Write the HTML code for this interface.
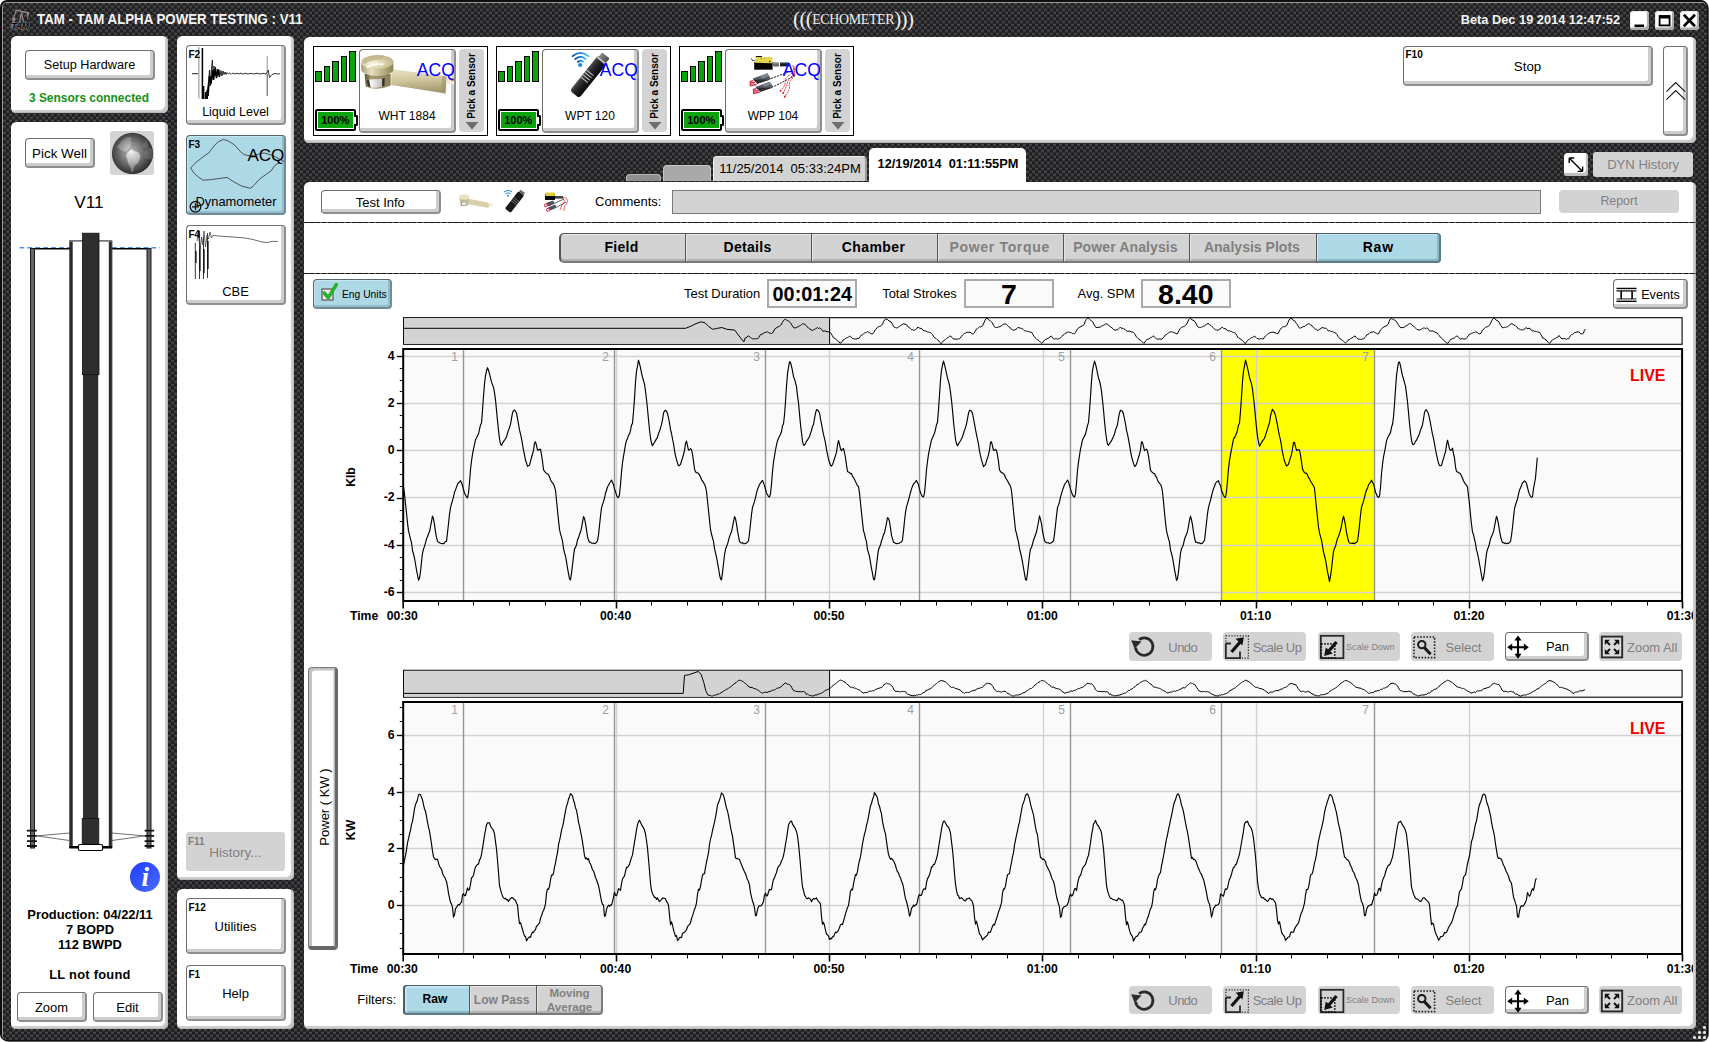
<!DOCTYPE html><html><head><meta charset="utf-8"><title>TAM</title><style>
*{box-sizing:border-box;margin:0;padding:0}
html,body{width:1709px;height:1042px;overflow:hidden;background:#fff}
body{font-family:"Liberation Sans",sans-serif;font-size:13px;color:#000;position:relative}
.abs,.panel,.btn,.dis,.t{position:absolute}
#win0{position:absolute;left:1px;top:1px;width:1708px;height:1041px;border-radius:8px;background:#5c5c5c}
#win{position:absolute;left:0;top:0;width:1708px;height:1041px;border-radius:7px;background:#0e0e0e;overflow:hidden}
#win2{position:absolute;left:2px;top:2px;width:1705px;height:1038px;border-radius:5px;border-left:1px solid #9a9a9a;border-top:1px solid #9a9a9a;
 background:#2c2c2e;overflow:hidden}
.panel{background:#fff;border-radius:5.5px;box-shadow:inset -1px -1px 0 #b9b9b9,inset -3px -3px 1px #cbcbcb}
.btn{background:#fff;border:1px solid #6e6e6e;border-right:2px solid #8e8e8e;border-bottom:2px solid #8e8e8e;border-radius:4px;
 box-shadow:inset -3px -3px 0 #cdcdcd;text-align:center;white-space:nowrap}
.dis{background:#d3d3d3;border-radius:4px;color:#808080;text-align:center;white-space:nowrap}
.t{white-space:pre;line-height:1}
.b{font-weight:bold}
.fk{position:absolute;left:1.5px;top:3.7px;font-weight:bold;font-size:10px;line-height:1}
</style></head><body>
<div id="win0"></div><div id="win"></div><div id="win2"><svg style="position:absolute;left:-3px;top:-3px" width="1709" height="1042"><defs><pattern id="cf" width="6" height="6" patternUnits="userSpaceOnUse"><rect x="0" y="0" width="3" height="1" fill="#1d1d1f"/><rect x="0" y="1" width="3" height="1" fill="#212123"/><rect x="0" y="2" width="3" height="1" fill="#29292b"/><rect x="3" y="0" width="3" height="1" fill="#4a4a4c"/><rect x="3" y="1" width="3" height="1" fill="#3a3a3c"/><rect x="3" y="2" width="3" height="1" fill="#2d2d2f"/><rect x="0" y="3" width="3" height="1" fill="#4a4a4c"/><rect x="0" y="4" width="3" height="1" fill="#3a3a3c"/><rect x="0" y="5" width="3" height="1" fill="#2d2d2f"/><rect x="3" y="3" width="3" height="1" fill="#1d1d1f"/><rect x="3" y="4" width="3" height="1" fill="#212123"/><rect x="3" y="5" width="3" height="1" fill="#29292b"/></pattern></defs><rect width="1709" height="1042" fill="url(#cf)" shape-rendering="crispEdges"/></svg></div>
<svg class="abs" style="left:8px;top:8px" width="26" height="26" viewBox="8 8 26 26">
<g stroke="#96828a" fill="none" stroke-linecap="round"><path d="M16.1 10.3 L28.6 13" stroke-width="1.5"/><path d="M16.1 10.3 L14 17.3" stroke-width="1.2"/><path d="M21.3 13.2 L19.7 21.5 M21.6 13.2 L23.3 21.5" stroke-width="1.3"/><path d="M13.5 22 L11 28" stroke-width="1.3"/></g>
<path d="M26.6 12.8 L29.1 12.5 L27.7 19.2 Z" fill="#a08c92"/><path d="M12.4 16.8 L15.6 18.6 L14.6 21.4 L12 20.6 Z" fill="#96828a"/>
<text x="11.6" y="28.8" font-family="Liberation Sans" font-size="9.3" font-style="italic" font-weight="bold" fill="#000" stroke="#8a8a8a" stroke-width="1.1" paint-order="stroke" textLength="17.5" lengthAdjust="spacingAndGlyphs">TAM</text>
</svg>
<div class="t b" style="top:12.75px;font-size:13.9px;left:37.40px;color:#f4f4f4;transform:scaleX(0.956);transform-origin:0 0;">TAM - TAM ALPHA POWER TESTING : V11</div>
<div class="t b" style="top:12.60px;font-size:13.4px;left:1219.80px;width:400px;text-align:right;color:#f4f4f4;transform:scaleX(0.955);transform-origin:100% 0;">Beta Dec 19 2014 12:47:52</div>
<div class="t" style="left:793px;top:7.5px;font-family:'Liberation Serif',serif;color:#f0f0f0;font-size:21px;letter-spacing:-0.6px;line-height:22px">(((<span style="font-size:13.9px;letter-spacing:-0.32px;position:relative;top:-1.6px">ECHOMETER</span>)))</div>
<div class="abs" style="left:1630px;top:10.5px;width:19px;height:19px;background:#fff;border-radius:3.5px;box-shadow:inset -2px -2.5px 1px #a8a8a8,inset 1px 1px 0 #e8e8e8"><svg width="19" height="19"><path d="M4.5 14.8 H14" stroke="#000" stroke-width="2.6"/></svg></div>
<div class="abs" style="left:1654.5px;top:10.5px;width:19px;height:19px;background:#fff;border-radius:3.5px;box-shadow:inset -2px -2.5px 1px #a8a8a8,inset 1px 1px 0 #e8e8e8"><svg width="19" height="19"><rect x="4.6" y="5" width="10" height="9.4" fill="none" stroke="#000" stroke-width="1.8"/><path d="M4.6 6 H14.6" stroke="#000" stroke-width="3"/></svg></div>
<div class="abs" style="left:1679.5px;top:10.5px;width:19px;height:19px;background:#fff;border-radius:3.5px;box-shadow:inset -2px -2.5px 1px #a8a8a8,inset 1px 1px 0 #e8e8e8"><svg width="19" height="19"><path d="M3.8 3.8 L15 15.2 M15 3.8 L3.8 15.2" stroke="#000" stroke-width="2.7"/></svg></div>
<div class="panel" style="left:11px;top:36px;width:157px;height:77px;"></div>
<div class="btn" style="left:25px;top:50px;width:130px;height:30px;"><div class="t" style="left:0;width:100%;text-align:center;top:8.2px;font-size:12.65px">Setup Hardware</div></div>
<div class="t b" style="top:93.03px;font-size:11.95px;left:-111.00px;width:400px;text-align:center;color:#169016;">3 Sensors connected</div>
<div class="panel" style="left:11px;top:122px;width:157px;height:907px;"></div>
<div class="btn" style="left:25px;top:138px;width:70px;height:29.5px;"><div class="t" style="left:0;width:100%;text-align:center;top:7.5px;font-size:13.4px">Pick Well</div></div>
<div class="abs" style="left:110px;top:131px;width:44px;height:43.6px;background:#d4d4d4;border-radius:3px"></div>
<svg class="abs" style="left:110px;top:131px" width="44" height="44" viewBox="0 0 44 44">
<defs><radialGradient id="gl" cx="0.47" cy="0.47" r="0.56"><stop offset="0" stop-color="#bcbcbc"/><stop offset="0.5" stop-color="#727272"/><stop offset="1" stop-color="#262626"/></radialGradient>
<radialGradient id="gl2" gradientUnits="userSpaceOnUse" cx="21" cy="20" r="22"><stop offset="0" stop-color="#f4f4f4"/><stop offset="0.45" stop-color="#c0c0c0"/><stop offset="1" stop-color="#6a6a6a"/></radialGradient></defs>
<circle cx="22.5" cy="22.4" r="20.6" fill="url(#gl)"/>
<path d="M7.2 16 L11 10.5 L16 6.7 L19.5 6 L21.9 6.7 L20.5 9.5 L21.9 12.5 L20.5 15.5 L18 18.7 L16 21 L13 20 L10 18.5 Z" fill="url(#gl2)" opacity=".5"/>
<path d="M17.5 21.4 L21.4 18 L23.9 20 L27.9 21 L30.2 23.9 L29.7 28.4 L27.9 31.9 L24.9 34.4 L23.9 36.9 L22.9 40.9 L21.2 40.9 L20.5 36.4 L18.5 32.9 L17 27.9 L16 24.4 Z" fill="url(#gl2)" opacity=".95"/>
<path d="M31.9 14.5 L34.4 12.5 L35.4 8.5 L37.4 11 L38.4 17 L41.9 17.5 L42.7 22 L42.4 27.9 L38.9 28.4 L34.9 26.9 L33.9 22 L35.4 19.5 L37.9 18 L34 16 Z" fill="#8a8a8a" opacity=".35"/>
</svg>
<div class="t " style="top:194.25px;font-size:17.3px;left:-111.00px;width:400px;text-align:center;color:#000;">V11</div>
<svg class="abs" style="left:11px;top:225px" width="157" height="640" viewBox="11 225 157 640">
<path d="M19.5 247.7 H70 M112 247.7 H160" stroke="#4f8df7" stroke-width="1.6" stroke-dasharray="4.8 3.1"/>
<path d="M30.5 248.7 H70 M111.5 248.7 H150.5" stroke="#000" stroke-width="1.4"/>
<!-- outer casing -->
<rect x="30.5" y="248.5" width="4" height="599.5" fill="#666" stroke="#1a1a1a" stroke-width="1"/>
<rect x="147" y="248.5" width="4" height="599.5" fill="#666" stroke="#1a1a1a" stroke-width="1"/>
<!-- inner casing -->
<rect x="69.3" y="240.2" width="3.4" height="607.5" fill="#2a2a2a"/><rect x="72.2" y="241" width=".6" height="606" fill="#6a6a6a"/>
<rect x="108.8" y="240.2" width="3.4" height="607.5" fill="#2a2a2a"/><rect x="111.7" y="241" width=".6" height="606" fill="#6a6a6a"/>
<path d="M70 240.9 H112" stroke="#777" stroke-width="1.7"/>
<path d="M69.3 847.3 H112.2" stroke="#000" stroke-width="2.4"/>
<!-- tubing -->
<rect x="83.6" y="370" width="14.2" height="452" fill="#2e2e2e" stroke="#111" stroke-width="0.8"/>
<rect x="82.4" y="233.2" width="16.6" height="141.5" fill="#2e2e2e" stroke="#111" stroke-width="0.8"/>
<rect x="82.2" y="818.6" width="16.6" height="26.4" fill="#2e2e2e" stroke="#111" stroke-width="0.8"/>
<rect x="78.4" y="844.5" width="24.2" height="6" rx="1.5" fill="#fff" stroke="#000" stroke-width="1.1"/>
<!-- perforations -->
<g stroke="#111" stroke-width="1.8"><path d="M27 830.7 H36.8 M27 835.9 H36.8 M27 841.1 H36.8 M27 846 H36.8"/><path d="M144.6 830.7 H154.2 M144.6 835.9 H154.2 M144.6 841.1 H154.2 M144.6 846 H154.2"/></g>
<g stroke="#333" stroke-width="0.7" fill="none"><path d="M36.8 835.9 L69.3 833 M36.8 835.9 L69.3 840.5 M144.6 835.9 L112 833 M144.6 835.9 L112 840.5"/></g>
</svg>
<svg class="abs" style="left:129px;top:861px" width="32" height="32" viewBox="0 0 32 32">
<defs><linearGradient id="ig" x1="0" y1="0" x2="1" y2="1"><stop offset="0" stop-color="#1f3dff"/><stop offset="1" stop-color="#4b6bff"/></linearGradient></defs>
<circle cx="16" cy="16" r="15" fill="url(#ig)"/>
<text x="16.3" y="25" text-anchor="middle" font-family="Liberation Serif" font-style="italic" font-weight="bold" font-size="27" fill="#fff">i</text></svg>
<div class="t b" style="top:908.85px;font-size:12.9px;left:-110.00px;width:400px;text-align:center;">Production: 04/22/11</div>
<div class="t b" style="top:923.75px;font-size:12.9px;left:-110.00px;width:400px;text-align:center;">7 BOPD</div>
<div class="t b" style="top:938.75px;font-size:12.9px;left:-110.00px;width:400px;text-align:center;">112 BWPD</div>
<div class="t b" style="top:968.75px;font-size:12.9px;left:-110.00px;width:400px;text-align:center;letter-spacing:0.25px;">LL not found</div>
<div class="btn" style="left:17px;top:992px;width:70px;height:29.5px;"><div class="t" style="left:0;width:100%;text-align:center;top:7.5px;font-size:13px">Zoom</div></div>
<div class="btn" style="left:93px;top:992px;width:70px;height:29.5px;"><div class="t" style="left:0;width:100%;text-align:center;top:7.5px;font-size:13px">Edit</div></div>
<div class="panel" style="left:177px;top:36px;width:117px;height:844px;"></div>
<div class="panel" style="left:177px;top:889px;width:117px;height:140px;"></div>
<div class="btn" style="left:186px;top:45px;width:100px;height:80px;"><svg class="abs" style="left:-1.2px;top:-1px" width="100" height="80" viewBox="186 45 100 80">
<path d="M198.9 47 V98.5" stroke="#888" stroke-width="1"/>
<path d="M202.4 48 V99 M203.6 86 V99 M205.6 92 V99 M207.3 90 V99" stroke="#000" stroke-width="1.5"/>
<path d="M206 99 L208.5 82 L209.5 70 L210.3 86 L211.5 68 L212.4 60 L213 78 L214 66 L214.8 76 L215.5 67 L216.4 75 L217.3 69 L218 75 L219 69.5 L220 75.5 L221 70.5 L222 76 L223 71 L224 74.5 L225 72 L226 74.5 L227 72.5 L228.5 74 L230 72.8 L231.5 74.3 L233 73 L235 74 L237 73.2 L239 74 L241 73 L243 74.2 L245 73.2 L248 74 L251 73.3 L254 74 L257 73.2 L260 74 L263 73.3 L266 74 L268.2 70 L269.5 77.5 L272 74.5 L275 73.5 L278 74 L280 73.6" stroke="#000" stroke-width="0.8" fill="none"/>
<path d="M208 96 L209.5 76 L211 84 L212.5 70 L213.5 80 L215 69 L216.5 78 L218 70 L219.5 77" stroke="#000" stroke-width="1.6" fill="none"/>
<path d="M192 73.7 H198" stroke="#000" stroke-width="0.9"/><path d="M267.2 56 V74" stroke="#666" stroke-width=".7"/><path d="M267.2 74 V96" stroke="#222" stroke-width=".8"/>
</svg><div class="fk">F2</div><div class="t" style="left:0;width:100%;text-align:center;top:60px;font-size:12.5px">Liquid Level</div></div>
<div class="btn" style="left:186px;top:135px;width:100px;height:80px;background:#add8e6;border-color:#56666c;border-right-color:#6f8c96;border-bottom-color:#6f8c96;box-shadow:inset -2px -2px 0 #94bccb,inset 1px 1px 0 #c8e6f0"><svg class="abs" style="left:-1px;top:0" width="100" height="80" viewBox="186 135 100 80">
<path d="M190.7 167.1 L195 162.3 L201.9 156.7 L208.8 151.9 L214 145 L218.3 140.7 L223.5 138.4 L228.7 140.2 L234.7 144.1 L240.8 151 L244.2 153.6 L250.3 155 L257.2 153.6 L264.1 151.9 L272.7 154.5 L279.6 158 L284 160.5" stroke="#444" stroke-width="0.9" fill="none"/>
<path d="M190.7 167.1 L194.1 172.3 L198.5 176.1 L202.8 179.2 L210.5 178.7 L219.2 177.5 L227 176.4 L233 180.4 L241.6 185.1 L250.3 187.3 L253.7 184.7 L258.9 178.7 L265.8 173.5 L271 170 L274.4 164.9 L279.6 161.4" stroke="#444" stroke-width="0.9" fill="none"/>
<circle cx="195.5" cy="205.8" r="5.3" fill="none" stroke="#111" stroke-width="1.3"/><path d="M192 205.8 H199 M195.5 202.3 V209.3" stroke="#111" stroke-width="1.3"/>
</svg><div class="fk">F3</div><div class="t" style="left:60.5px;top:10.8px;font-size:17px">ACQ</div><div class="t" style="left:8.5px;top:59.5px;font-size:12.9px">Dynamometer</div></div>
<div class="btn" style="left:186px;top:225px;width:100px;height:80px;"><svg class="abs" style="left:0;top:0" width="100" height="80" viewBox="186 225 100 80">
<path d="M194.3 242 V278 M198.5 230 V278 M202.5 236 V278 M206.5 232 V277" stroke="#222" stroke-width="0.9"/>
<path d="M195 250 V262 M199 244 V270 M203 248 V272 M207 240 V268" stroke="#000" stroke-width="1.2"/>
<path d="M196 240 L197.3 232 L199 248 L200.5 236 L201.5 244 L203 230 L204.5 246 L206 234 L207.5 238 L209 231 L210.5 237 L212 234.5 L220 235.2 L232 236 L244 237 L252 238.5 L260 240.8 L266 241.5 L272 240.3 L277 240.5" stroke="#444" stroke-width="0.8" fill="none"/>
</svg><div class="fk">F4</div><div class="t" style="left:0;width:100%;text-align:center;top:59.5px;font-size:12.9px">CBE</div></div>
<div class="dis" style="left:186px;top:832px;width:99px;height:38.5px;border-radius:3px"><div class="fk" style="top:4.5px;left:2px;color:#808080">F11</div><div class="t" style="left:0;width:100%;text-align:center;top:13.5px;font-size:13.5px">History...</div></div>
<div class="btn" style="left:186px;top:898px;width:100px;height:56px;"><div class="fk">F12</div><div class="t" style="left:0;width:100%;text-align:center;top:21px;font-size:13px">Utilities</div></div>
<div class="btn" style="left:186px;top:965px;width:100px;height:56px;"><div class="fk">F1</div><div class="t" style="left:0;width:100%;text-align:center;top:21px;font-size:13px">Help</div></div>
<div class="panel" style="left:304px;top:37px;width:1392px;height:106px;"></div>
<div class="abs" style="left:313px;top:46px;width:175px;height:90px;border:1px solid #000;background:#fff"></div>
<div class="abs" style="left:315.20px;top:71.2px;width:6.8px;height:10.6px;background:#0aa50a;border:1.7px solid #000"></div>
<div class="abs" style="left:323.65px;top:66.2px;width:6.8px;height:15.6px;background:#0aa50a;border:1.7px solid #000"></div>
<div class="abs" style="left:332.10px;top:61.2px;width:6.8px;height:20.6px;background:#0aa50a;border:1.7px solid #000"></div>
<div class="abs" style="left:340.55px;top:56.2px;width:6.8px;height:25.6px;background:#0aa50a;border:1.7px solid #000"></div>
<div class="abs" style="left:349.00px;top:51.2px;width:6.8px;height:30.6px;background:#0aa50a;border:1.7px solid #000"></div>
<div class="abs" style="left:315px;top:109px;width:40.5px;height:21.5px;border:2px solid #000;border-radius:2px;background:#fff"></div>
<div class="abs" style="left:354px;top:114.5px;width:4px;height:11px;border:2px solid #000;border-left:none;border-radius:0 2px 2px 0;background:#fff"></div>
<div class="abs" style="left:318px;top:112px;width:34.5px;height:15.5px;background:#0aa50a"></div>
<div class="t b" style="left:318px;width:34.5px;text-align:center;top:115.2px;font-size:11px">100%</div>
<div class="btn" style="left:359px;top:49px;width:97px;height:83.5px;overflow:hidden"><svg class="abs" style="left:0;top:0" width="97" height="60" viewBox="0 0 97 60">
<defs><linearGradient id="s1a" x1="0" y1="0" x2="0.12" y2="1"><stop offset="0" stop-color="#e9e2c4"/><stop offset=".45" stop-color="#d3c9a2"/><stop offset="1" stop-color="#a3976e"/></linearGradient>
<linearGradient id="s1b" x1="0" y1="0" x2="1" y2="0"><stop offset="0" stop-color="#a89c72"/><stop offset=".3" stop-color="#e9e2c6"/><stop offset=".62" stop-color="#c2b68a"/><stop offset="1" stop-color="#8e8258"/></linearGradient>
<linearGradient id="s1c" x1="0" y1="0" x2="1" y2="0"><stop offset="0" stop-color="#5e5438"/><stop offset=".25" stop-color="#a89c70"/><stop offset="1" stop-color="#8a7e56"/></linearGradient>
<linearGradient id="s1d" x1="0" y1="0" x2="1" y2="0"><stop offset="0" stop-color="#fff"/><stop offset="1" stop-color="#bdbdbd"/></linearGradient>
<radialGradient id="s1e" cx=".35" cy=".6" r=".8"><stop offset="0" stop-color="#f7f3df"/><stop offset=".5" stop-color="#d9cfa8"/><stop offset="1" stop-color="#b4a87e"/></radialGradient></defs>
<path d="M31.3 19 L86.7 26.6 L85.5 43.6 L31.3 35.1 Z" fill="url(#s1a)"/>
<path d="M82.2 26 L86.7 26.6 L85.5 43.6 L81.3 43 Z" fill="#9c9068" opacity=".55"/>
<path d="M86.7 27.2 L94 26.6 L94 34.5 L86.7 33.9 Z" fill="#f3eedc"/><rect x="91" y="28.3" width="3" height="2.4" fill="#d63a3a"/>
<path d="M4.6 24 L30.7 24 L30.7 35.5 Q17.5 41.5 5.8 36.5 Z" fill="url(#s1c)"/>
<path d="M9 29.6 L22.2 28.8 L22.2 36.6 Q15 38.6 10.4 37.2 Z" fill="url(#s1d)"/><path d="M22.2 28.8 L24.6 28 L24.6 35.8 L22.2 36.6 Z" fill="#2c2c2c"/><path d="M9 29.6 L10.4 37.2 L8.4 36.4 L6.6 30.6 Z" fill="#3a3424"/>
<path d="M1.2 12 L1.2 19.5 A16.1 6.5 0 0 0 33.4 19.5 L33.4 12 Z" fill="url(#s1b)"/>
<ellipse cx="17.3" cy="12" rx="16.1" ry="6.9" fill="url(#s1e)"/>
<path d="M2 10.5 Q10 3.6 24 5.6 L22 9.5 Q10 9.5 4 14.5 Z" fill="#bfb286" opacity=".75"/>
<path d="M6 16.5 Q12 13 19 12.5 L18 15 Q11 16 7.5 18.5 Z" fill="#fffdf2" opacity=".9"/>
<ellipse cx="21.5" cy="14.3" rx="2.6" ry="1.1" fill="#fffef6" opacity=".9"/>
</svg><div class="t" style="left:0;width:100%;text-align:center;top:60px;font-size:12px;padding-right:0px">WHT 1884</div><div class="t" style="right:-1px;top:11.9px;font-size:17.6px;color:#0000ff">ACQ</div></div>
<div class="abs" style="left:459px;top:49px;width:25px;height:83px;background:#d3d3d3;border-radius:4px"></div>
<div class="t b" style="left:471.5px;top:85.8px;font-size:10px;transform:translate(-50%,-50%) rotate(-90deg)">Pick a Sensor</div>
<svg class="abs" style="left:465px;top:121px" width="14" height="9"><path d="M0.5 1 H13.5 L7 8.5 Z" fill="#6e6e6e"/></svg>
<div class="abs" style="left:496px;top:46px;width:175px;height:90px;border:1px solid #000;background:#fff"></div>
<div class="abs" style="left:498.20px;top:71.2px;width:6.8px;height:10.6px;background:#0aa50a;border:1.7px solid #000"></div>
<div class="abs" style="left:506.65px;top:66.2px;width:6.8px;height:15.6px;background:#0aa50a;border:1.7px solid #000"></div>
<div class="abs" style="left:515.10px;top:61.2px;width:6.8px;height:20.6px;background:#0aa50a;border:1.7px solid #000"></div>
<div class="abs" style="left:523.55px;top:56.2px;width:6.8px;height:25.6px;background:#0aa50a;border:1.7px solid #000"></div>
<div class="abs" style="left:532.00px;top:51.2px;width:6.8px;height:30.6px;background:#0aa50a;border:1.7px solid #000"></div>
<div class="abs" style="left:498px;top:109px;width:40.5px;height:21.5px;border:2px solid #000;border-radius:2px;background:#fff"></div>
<div class="abs" style="left:537px;top:114.5px;width:4px;height:11px;border:2px solid #000;border-left:none;border-radius:0 2px 2px 0;background:#fff"></div>
<div class="abs" style="left:501px;top:112px;width:34.5px;height:15.5px;background:#0aa50a"></div>
<div class="t b" style="left:501px;width:34.5px;text-align:center;top:115.2px;font-size:11px">100%</div>
<div class="btn" style="left:542px;top:49px;width:97px;height:83.5px;overflow:hidden"><svg class="abs" style="left:0;top:0" width="97" height="60" viewBox="0 0 97 60">
<defs><linearGradient id="s2a" x1="0" y1="0" x2="0" y2="1"><stop offset="0" stop-color="#4e4e4e"/><stop offset=".35" stop-color="#2a2a2a"/><stop offset="1" stop-color="#080808"/></linearGradient>
<linearGradient id="s2b" x1="0" y1="0" x2="0" y2="1"><stop offset="0" stop-color="#8a8a8a"/><stop offset="1" stop-color="#4a4a4a"/></linearGradient>
<linearGradient id="s2w" x1="0" y1="0" x2="1" y2="0"><stop offset="0" stop-color="#0048b0"/><stop offset="1" stop-color="#38c4ff"/></linearGradient></defs>
<g transform="translate(47.8,24.1) rotate(-51.2)"><rect x="-26" y="-6" width="45" height="12" rx="3" fill="url(#s2a)"/>
<rect x="18" y="-4.8" width="6" height="9.6" rx="1" fill="url(#s2b)"/><rect x="16.2" y="-5.8" width="2" height="11.6" fill="#bdbdbd"/>
<g stroke="#b8b8b8" stroke-width="1.1"><path d="M-8.5 -6 V3 M-5.5 -6 V3 M-2.5 -6 V3 M0.5 -6 V3"/></g></g>
<g fill="none" stroke="url(#s2w)" stroke-width="1.7" stroke-linecap="round"><path d="M29.6 6.2 Q37.5 -0.6 45.4 6.2"/><path d="M32.2 9.2 Q37.5 4.4 42.6 9"/><path d="M34.8 12 Q37.5 9.6 40.2 11.8"/></g><circle cx="37.2" cy="15" r="2.1" fill="#168ae0"/>
</svg><div class="t" style="left:0;width:100%;text-align:center;top:60px;font-size:12px;padding-right:0px">WPT 120</div><div class="t" style="right:-1px;top:11.9px;font-size:17.6px;color:#0000ff">ACQ</div></div>
<div class="abs" style="left:642px;top:49px;width:25px;height:83px;background:#d3d3d3;border-radius:4px"></div>
<div class="t b" style="left:654.5px;top:85.8px;font-size:10px;transform:translate(-50%,-50%) rotate(-90deg)">Pick a Sensor</div>
<svg class="abs" style="left:648px;top:121px" width="14" height="9"><path d="M0.5 1 H13.5 L7 8.5 Z" fill="#6e6e6e"/></svg>
<div class="abs" style="left:679px;top:46px;width:175px;height:90px;border:1px solid #000;background:#fff"></div>
<div class="abs" style="left:681.20px;top:71.2px;width:6.8px;height:10.6px;background:#0aa50a;border:1.7px solid #000"></div>
<div class="abs" style="left:689.65px;top:66.2px;width:6.8px;height:15.6px;background:#0aa50a;border:1.7px solid #000"></div>
<div class="abs" style="left:698.10px;top:61.2px;width:6.8px;height:20.6px;background:#0aa50a;border:1.7px solid #000"></div>
<div class="abs" style="left:706.55px;top:56.2px;width:6.8px;height:25.6px;background:#0aa50a;border:1.7px solid #000"></div>
<div class="abs" style="left:715.00px;top:51.2px;width:6.8px;height:30.6px;background:#0aa50a;border:1.7px solid #000"></div>
<div class="abs" style="left:681px;top:109px;width:40.5px;height:21.5px;border:2px solid #000;border-radius:2px;background:#fff"></div>
<div class="abs" style="left:720px;top:114.5px;width:4px;height:11px;border:2px solid #000;border-left:none;border-radius:0 2px 2px 0;background:#fff"></div>
<div class="abs" style="left:684px;top:112px;width:34.5px;height:15.5px;background:#0aa50a"></div>
<div class="t b" style="left:684px;width:34.5px;text-align:center;top:115.2px;font-size:11px">100%</div>
<div class="btn" style="left:725px;top:49px;width:97px;height:83.5px;overflow:hidden"><svg class="abs" style="left:0;top:0" width="97" height="60" viewBox="0 0 97 60">
<rect x="28.2" y="12" width="18.4" height="7.7" fill="#050505"/><path d="M29.8 6.7 L46.6 7.2 L46.2 13.3 L28.7 12.8 Z" fill="#e4d64a"/><path d="M29.8 6 H36 V7 H29.8Z" fill="#111"/>
<circle cx="35" cy="8.6" r=".8" fill="#7a9ad0"/><circle cx="39.2" cy="8.8" r=".7" fill="#a8b8c8"/><circle cx="43.8" cy="11.6" r=".8" fill="#222"/>
<path d="M25.3 8.3 L26.6 10.6 L28.7 10.4" fill="none" stroke="#222" stroke-width=".9"/>
<rect x="47" y="12" width="6" height="4.6" fill="#6e6e6e"/><rect x="47" y="12" width="6" height="1.4" fill="#aaa"/><rect x="54" y="12.2" width="9" height="4.2" fill="#1a1a1a"/><rect x="54" y="12.2" width="9" height="1" fill="#8aa0b8"/>
<path d="M45.1 28.5 L64.6 21.2 M48.2 36.4 L69.3 25.4" stroke="#111" stroke-width=".9" stroke-dasharray="2.2 .9"/>
<path d="M26.6 28.5 L36 25.2 L41.4 23.3 L45.1 29.1 L31.4 33.8 Z" fill="#5a6068"/><path d="M34 26 L41.4 23.3 L43 26 L36 28.6 Z" fill="#7e8892"/><path d="M27 29.5 L44.6 29.5 L31.4 33.8 Z" fill="#2c2e32"/>
<path d="M29.3 37 L38 33.8 L43.5 31.7 L47.7 37 L34.5 41.7 Z" fill="#5a6068"/><path d="M36.5 34.4 L43.5 31.7 L45.4 34.2 L38.5 36.8 Z" fill="#7e8892"/><path d="M30 37.8 L47.4 37.4 L34.5 41.7 Z" fill="#2c2e32"/>
<path d="M27.4 30.6 L24.4 31.6 L24.4 35.6 L30.6 34.4 M25 33 L29 32.6" fill="none" stroke="#d2364e" stroke-width="1.5"/><path d="M30.4 38.4 L27.6 39.6 L27.8 43.4 L33.8 42 M28.4 41 L32.4 40.4" fill="none" stroke="#d2364e" stroke-width="1.5"/>
<g fill="none" stroke="#e31d1d" stroke-width=".9" stroke-dasharray="1.8 .8"><path d="M66.7 15.4 Q69 20 65 24 Q58.5 28 59.3 30 Q60 35 55.1 40.1"/><path d="M67.5 16 Q70.5 22 66 26 Q61 31 61 35 L57.7 42.2"/><path d="M68 18 Q70 24 67 28 Q62.5 31.5 63.5 35.9 Q64 40 59.3 45.9"/></g>
<path d="M55.1 40.1 l-1 1.6 M57.7 42.2 l-1 1.6 M59.3 45.9 l-1 1.6" stroke="#d21d1d" stroke-width="1.6"/>
</svg><div class="t" style="left:0;width:100%;text-align:center;top:60px;font-size:12px;padding-right:0px">WPP 104</div><div class="t" style="right:-1px;top:11.9px;font-size:17.6px;color:#0000ff">ACQ</div></div>
<div class="abs" style="left:825px;top:49px;width:25px;height:83px;background:#d3d3d3;border-radius:4px"></div>
<div class="t b" style="left:837.5px;top:85.8px;font-size:10px;transform:translate(-50%,-50%) rotate(-90deg)">Pick a Sensor</div>
<svg class="abs" style="left:831px;top:121px" width="14" height="9"><path d="M0.5 1 H13.5 L7 8.5 Z" fill="#6e6e6e"/></svg>
<div class="btn" style="left:1403px;top:45.5px;width:250px;height:40.0px;"><div class="fk" style="left:1.5px;top:3px">F10</div><div class="t" style="left:0;width:100%;text-align:center;top:13px;font-size:13.3px">Stop</div></div>
<div class="btn" style="left:1663px;top:45.5px;width:24.5px;height:90.0px;"><svg class="abs" style="left:0px;top:30px" width="24" height="26"><path d="M2.4 14.6 L11.7 5.6 L21 14.6 M2.4 22.6 L11.7 13.6 L21 22.6" fill="none" stroke="#111" stroke-width="1.1"/></svg></div>
<div class="abs" style="left:626px;top:174px;width:35px;height:6.5px;background:#8f8f8f;border-radius:4px 4px 0 0;border:1px solid #b5b5b5;border-bottom:none"></div>
<div class="abs" style="left:663px;top:165px;width:48px;height:15.5px;background:#a9a9a9;border-radius:4px 4px 0 0;border:1px solid #c6c6c6;border-bottom:none"></div>
<div class="abs" style="left:713px;top:156px;width:154px;height:24.5px;background:#d3d3d3;border-radius:4px 4px 0 0;border:1px solid #efefef;border-right:2px solid #9a9a9a;border-bottom:none"></div>
<div class="t " style="top:162.00px;font-size:13px;left:590.00px;width:400px;text-align:center;">11/25/2014  05:33:24PM</div>
<div class="panel" style="left:304px;top:182px;width:1392px;height:847px;"></div>
<div class="abs" style="left:869px;top:148px;width:157px;height:40px;background:#fff;border-radius:5px 5px 0 0"></div>
<div class="t b" style="top:158.10px;font-size:12.8px;left:748.00px;width:400px;text-align:center;">12/19/2014  01:11:55PM</div>
<div class="abs" style="left:1563.6px;top:152.6px;width:24px;height:23.8px;background:#fff;border-radius:3.5px;box-shadow:inset -2px -3px 1px #bcbcbc"><svg width="24" height="24"><path d="M5.2 5 L18.6 18.4 M5.2 5 V10 M5.2 5 H10.2 M18.6 18.4 V13.4 M18.6 18.4 H13.6" fill="none" stroke="#000" stroke-width="1.4"/></svg></div>
<div class="dis" style="left:1593.3px;top:152.3px;width:99.70000000000005px;height:24.5px;border-radius:3px"><div class="t" style="left:0;width:100%;text-align:center;top:5.5px;font-size:13.1px">DYN History</div></div>
<div class="btn" style="left:321px;top:190px;width:119.5px;height:23.5px;"><div class="t" style="left:0;width:100%;text-align:center;top:4.8px;font-size:13px">Test Info</div></div>
<svg class="abs" style="left:457px;top:190px" width="36" height="24" viewBox="0 0 36 24">
<path d="M10 8.5 L31 12.5 L32.5 13.5 L31.5 18 L10 14 Z" fill="#d9d0aa"/><path d="M31 13 L35.5 14 L35.5 16 L32 15.8 Z" fill="#eee6cf"/>
<path d="M2.5 8 L12 8 L11.5 15 Q7 17 3.5 15.5 Z" fill="#c8bf98"/><ellipse cx="7.2" cy="7" rx="5.2" ry="2.8" fill="#e8e1c2"/><rect x="4.5" y="12" width="5" height="3.5" fill="#eee" stroke="#666" stroke-width=".4"/></svg>
<svg class="abs" style="left:501.3px;top:187px" width="26" height="28" viewBox="0 0 26 28">
<g transform="translate(13.5,15) rotate(-52)"><rect x="-11" y="-3.6" width="22" height="7.2" rx="1.5" fill="#1a1a1a"/><rect x="11" y="-2.8" width="2.5" height="5.6" fill="#666"/><path d="M-1 -3.6 V3.6 M1 -3.6 V3.6 M3 -3.6 V3.6" stroke="#999" stroke-width=".6"/></g>
<g fill="none" stroke="#1b8fe8" stroke-width="1"><path d="M3 5 Q7 2 11 4.5"/><path d="M4.5 7 Q7 5 9.5 6.5"/></g><circle cx="7" cy="8.7" r="1" fill="#1b8fe8"/></svg>
<svg class="abs" style="left:542px;top:190px" width="30" height="24" viewBox="0 0 30 24">
<rect x="3" y="3.5" width="10" height="6.5" fill="#0a0a0a"/><path d="M3.3 3.5 L4 2.5 H12.5 L13 6 H3.3 Z" fill="#e0cf3a"/><rect x="13" y="6" width="8" height="2.6" fill="#444"/>
<path d="M4 13 L11 10.5 L13 13.5 L6.5 16.5 Z" fill="#50545a"/><path d="M6 17.5 L13 14.5 L15 17.5 L8.5 20.5 Z" fill="#50545a"/>
<path d="M2.5 14.5 L4.5 13.5 L5.5 16 L3 17Z M4.5 19 L6.5 18 L7.5 20.5 L5 21.5Z" fill="none" stroke="#d03050" stroke-width="1"/>
<g fill="none" stroke="#e02020" stroke-width=".7"><path d="M21 7.5 Q27 8 25 13 Q21 17 22 21"/><path d="M21 8.5 Q24 12 20 15 L18 20"/><path d="M13 13 L22 9 M15 17 L24 12" stroke="#222"/></g></svg>
<div class="t " style="top:195.10px;font-size:13px;left:595.00px;">Comments:</div>
<div class="abs" style="left:672px;top:190px;width:869px;height:23.6px;background:#d3d3d3;border:1px solid #7a7a7a"></div>
<div class="dis" style="left:1559px;top:190px;width:120px;height:23px;"><div class="t" style="left:0;width:100%;text-align:center;top:5.3px;font-size:12.4px">Report</div></div>
<div class="abs" style="left:304px;top:222px;width:1392px;height:1px;background:repeating-linear-gradient(90deg,#111 0 4px,#555 4px 6px)"></div>
<div class="abs" style="left:304px;top:273px;width:1392px;height:1px;background:repeating-linear-gradient(90deg,#111 0 4px,#555 4px 6px)"></div>
<div class="abs" style="left:559px;top:233px;width:882px;height:30px;background:#d3d3d3;border:1px solid #555;border-left:2px solid #555;border-bottom:2px solid #7a7a7a;border-radius:5px;box-shadow:inset 0 1px 0 #e8e8e8,inset 0 -2px 0 #b0b0b0"></div>
<div class="t b" style="top:239.60px;font-size:14px;left:421.56px;width:400px;text-align:center;color:#000;letter-spacing:0.33px;">Field</div>
<div class="abs" style="left:685px;top:234px;width:1px;height:28px;background:#555"></div><div class="abs" style="left:686px;top:234px;width:1px;height:27px;background:#e4e4e4"></div>
<div class="t b" style="top:239.60px;font-size:14px;left:547.54px;width:400px;text-align:center;color:#000;letter-spacing:0.28px;">Details</div>
<div class="abs" style="left:811px;top:234px;width:1px;height:28px;background:#555"></div><div class="abs" style="left:812px;top:234px;width:1px;height:27px;background:#e4e4e4"></div>
<div class="t b" style="top:239.60px;font-size:14px;left:673.61px;width:400px;text-align:center;color:#000;letter-spacing:0.42px;">Chamber</div>
<div class="abs" style="left:937px;top:234px;width:1px;height:28px;background:#555"></div><div class="abs" style="left:938px;top:234px;width:1px;height:27px;background:#e4e4e4"></div>
<div class="t b" style="top:239.60px;font-size:14px;left:799.74px;width:400px;text-align:center;color:#808080;letter-spacing:0.67px;">Power Torque</div>
<div class="abs" style="left:1063px;top:234px;width:1px;height:28px;background:#555"></div><div class="abs" style="left:1064px;top:234px;width:1px;height:27px;background:#e4e4e4"></div>
<div class="t b" style="top:239.60px;font-size:14px;left:925.46px;width:400px;text-align:center;color:#808080;letter-spacing:0.12px;">Power Analysis</div>
<div class="abs" style="left:1189px;top:234px;width:1px;height:28px;background:#555"></div><div class="abs" style="left:1190px;top:234px;width:1px;height:27px;background:#e4e4e4"></div>
<div class="t b" style="top:239.60px;font-size:14px;left:1051.91px;width:400px;text-align:center;color:#808080;letter-spacing:0.02px;">Analysis Plots</div>
<div class="abs" style="left:1316px;top:233px;width:125px;height:30px;background:#add8e6;border:1px solid #4c5e66;border-right:2px solid #5b7d8a;border-bottom:2px solid #5b7d8a;border-radius:0 4px 4px 0;box-shadow:inset -2px -2px 0 #8fb6c3,inset 1px 1px 0 #c8e6f0"></div>
<div class="abs" style="left:1316px;top:234px;width:1px;height:28px;background:#555"></div><div class="abs" style="left:1317px;top:234px;width:1px;height:27px;background:#e4e4e4"></div>
<div class="t b" style="top:239.60px;font-size:14px;left:1178.28px;width:400px;text-align:center;color:#000;letter-spacing:0.75px;">Raw</div>
<div class="btn" style="left:313px;top:279px;width:79.30000000000001px;height:29.5px;background:#add8e6;border-color:#56666c;border-right-color:#6f8c96;border-bottom-color:#6f8c96;box-shadow:inset -2px -2px 0 #94bccb,inset 1px 1px 0 #c8e6f0"><svg class="abs" style="left:3px;top:0px" width="26" height="26"><rect x="5" y="9" width="11" height="11" fill="#ececec" stroke="#666" stroke-width="1.4"/><path d="M7.2 13 L11.3 17.6 L19.3 4.6" fill="none" stroke="#27b327" stroke-width="3.6" stroke-linecap="round" stroke-linejoin="round"/></svg><div class="t" style="left:28px;top:10px;font-size:10.3px">Eng Units</div></div>
<div class="t " style="top:287.52px;font-size:12.95px;left:684.00px;">Test Duration</div>
<div class="abs" style="left:767px;top:279px;width:90px;height:29px;background:#fafafa;border:2px solid #aaa"></div>
<div class="t b" style="top:285.18px;font-size:19.85px;left:612.30px;width:400px;text-align:center;">00:01:24</div>
<div class="t " style="top:287.54px;font-size:12.92px;left:882.20px;">Total Strokes</div>
<div class="abs" style="left:964px;top:279px;width:90px;height:29px;background:#fafafa;border:2px solid #aaa"></div>
<div class="t b" style="top:279.75px;font-size:28.5px;left:809.00px;width:400px;text-align:center;">7</div>
<div class="t " style="top:287.52px;font-size:12.95px;left:1077.60px;">Avg. SPM</div>
<div class="abs" style="left:1141px;top:279px;width:90px;height:29px;background:#fafafa;border:2px solid #aaa"></div>
<div class="t b" style="top:279.75px;font-size:28.5px;left:985.80px;width:400px;text-align:center;">8.40</div>
<div class="btn" style="left:1613px;top:279px;width:74.5px;height:29.5px;"><svg class="abs" style="left:1px;top:6px" width="24" height="18"><path d="M1.5 2.6 H21.5 M1.5 15.2 H21.5" stroke="#000" stroke-width="1.5"/><path d="M1.5 4.8 H21.5 M1.5 13 H21.5" stroke="#000" stroke-width="1.2"/><path d="M2.5 3.7 H21 M2.5 14.1 H21" stroke="#fff" stroke-width=".9" stroke-dasharray="1.2 1.2"/><path d="M6.2 5 V13 M17.1 5 V13" stroke="#000" stroke-width="1.6"/></svg><div class="t" style="left:27.2px;top:8.7px;font-size:12.6px">Events</div></div>
<svg class="abs" style="left:304px;top:310px" width="1389.3" height="670" viewBox="304 310 1389.3 670" font-family="Liberation Sans, sans-serif">
<rect x="403.6" y="317.7" width="1278.5" height="26.600000000000023" fill="#fafafa" stroke="#000" stroke-width="1.1"/>
<rect x="404.1" y="318.2" width="425.2" height="25.600000000000023" fill="#d3d3d3"/>
<path d="M829.6 318.2 V343.8" stroke="#000" stroke-width="1"/>
<polyline points="404.0,328.3 685.7,328.3 690.9,326.2 696.0,323.6 701.2,321.8 705.1,322.9 708.9,326.7 712.8,329.3 716.6,328.5 721.8,327.5 726.9,329.3 734.7,330.1 739.8,337.0 743.9,341.9 745.0,338.2 746.0,337.6 747.1,337.2 748.2,335.8 749.2,336.4 750.3,337.4 751.4,338.1 752.4,338.9 753.5,338.6 754.6,339.0 755.6,338.7 756.7,338.6 757.8,338.7 758.8,337.5 759.9,335.3 761.0,334.4 762.0,334.2 763.1,333.6 764.2,332.8 765.2,332.2 766.3,332.4 767.4,331.6 768.4,332.7 769.5,332.9 770.6,333.3 771.6,333.5 772.7,332.8 773.8,331.0 774.8,329.0 775.9,328.3 777.0,327.4 778.0,326.8 779.1,326.6 780.2,325.4 781.2,324.9 782.3,322.5 783.4,320.8 784.4,319.6 785.5,319.3 786.6,320.1 787.6,320.6 788.7,321.0 789.8,322.1 790.8,323.3 791.9,325.0 793.0,326.9 794.0,327.8 795.1,328.0 796.2,327.6 797.2,326.9 798.3,327.0 799.4,325.8 800.4,325.5 801.5,324.7 802.6,323.6 803.6,323.9 804.7,324.0 805.8,325.4 806.8,326.5 807.9,327.2 809.0,328.5 810.0,329.0 811.1,330.0 812.2,330.4 813.2,330.1 814.3,329.4 815.4,329.1 816.4,328.1 817.5,327.6 818.6,328.5 819.6,328.0 820.7,328.6 821.8,329.6 822.8,331.2 823.9,331.2 825.0,330.9 826.0,331.2 827.1,331.8 828.2,331.6 829.2,332.3 830.3,332.4 831.4,334.0 832.4,335.8 833.5,337.9 834.6,338.0 835.6,339.0 836.7,340.1 837.8,341.3 838.8,341.7 839.9,343.0 841.0,342.9 842.0,341.7 843.1,340.0 844.2,339.7 845.2,338.6 846.3,338.1 847.4,337.6 848.4,337.1 849.5,336.3 850.6,336.4 851.6,337.7 852.7,338.5 853.8,338.7 854.8,339.0 855.9,339.1 857.0,338.8 858.0,338.5 859.1,338.4 860.2,336.6 861.2,335.1 862.3,334.8 863.4,334.0 864.4,333.1 865.5,332.7 866.6,332.3 867.6,331.6 868.7,332.4 869.8,332.8 870.8,333.6 871.9,333.9 873.0,333.7 874.0,332.2 875.1,329.9 876.2,329.0 877.2,327.6 878.3,326.8 879.4,326.5 880.4,326.1 881.5,325.4 882.6,324.0 883.6,321.6 884.7,319.7 885.8,318.9 886.8,319.3 887.9,319.7 889.0,321.0 890.0,321.3 891.1,322.0 892.2,323.7 893.2,325.7 894.3,327.2 895.4,327.6 896.4,327.9 897.5,327.7 898.6,327.0 899.6,326.4 900.7,325.5 901.8,325.0 902.8,324.0 903.9,323.6 905.0,324.3 906.0,324.4 907.1,325.3 908.2,327.0 909.2,327.5 910.3,328.3 911.4,329.5 912.4,329.7 913.5,330.2 914.6,330.2 915.6,329.5 916.7,328.7 917.8,327.0 918.8,327.8 919.9,328.2 921.0,328.5 922.0,328.9 923.1,330.3 924.2,330.7 925.2,330.8 926.3,331.3 927.4,331.8 928.4,332.1 929.5,332.4 930.6,332.7 931.6,333.5 932.7,334.8 933.8,336.9 934.8,337.8 935.9,338.3 937.0,339.4 938.0,340.3 939.1,341.3 940.2,342.7 941.2,343.8 942.3,342.2 943.4,341.0 944.4,340.0 945.5,339.5 946.6,338.4 947.6,337.7 948.7,337.1 949.8,336.1 950.8,336.0 951.9,337.4 953.0,338.7 954.0,339.2 955.1,339.0 956.2,339.2 957.2,339.3 958.3,338.6 959.4,338.9 960.4,338.0 961.5,336.2 962.6,335.0 963.6,334.2 964.7,333.2 965.8,333.1 966.8,332.2 967.9,332.3 969.0,332.3 970.0,332.2 971.1,332.9 972.2,333.9 973.2,333.9 974.3,332.9 975.4,330.7 976.4,329.1 977.5,328.7 978.6,327.7 979.6,326.7 980.7,326.9 981.8,326.3 982.8,325.4 983.9,322.9 985.0,320.3 986.0,318.6 987.1,318.0 988.2,319.4 989.2,320.1 990.3,320.7 991.4,321.8 992.4,322.9 993.5,325.3 994.6,327.0 995.6,327.5 996.7,327.5 997.8,327.2 998.8,326.9 999.9,326.7 1001.0,325.9 1002.0,325.5 1003.1,324.3 1004.2,324.2 1005.2,323.8 1006.3,324.3 1007.4,325.3 1008.4,326.6 1009.5,327.0 1010.6,328.5 1011.6,329.1 1012.7,329.9 1013.8,330.3 1014.8,329.7 1015.9,329.4 1017.0,328.6 1018.0,327.3 1019.1,327.9 1020.2,328.1 1021.2,328.3 1022.3,328.7 1023.4,329.6 1024.4,330.7 1025.5,331.0 1026.6,331.1 1027.6,331.5 1028.7,331.4 1029.8,332.1 1030.8,332.2 1031.9,332.5 1033.0,334.7 1034.0,336.3 1035.1,337.8 1036.2,338.6 1037.2,339.7 1038.3,340.2 1039.4,341.2 1040.4,342.2 1041.5,343.2 1042.6,342.8 1043.6,341.1 1044.7,339.8 1045.8,339.3 1046.8,339.0 1047.9,338.3 1049.0,337.9 1050.0,337.0 1051.1,335.9 1052.2,336.9 1053.2,338.5 1054.3,339.2 1055.4,338.7 1056.4,338.7 1057.5,339.0 1058.6,338.7 1059.6,338.6 1060.7,337.8 1061.8,336.5 1062.8,335.2 1063.9,334.7 1065.0,333.4 1066.0,333.1 1067.1,332.6 1068.2,331.8 1069.2,332.2 1070.3,332.6 1071.4,332.6 1072.4,333.7 1073.5,333.6 1074.6,333.7 1075.6,332.3 1076.7,330.2 1077.8,328.5 1078.8,327.8 1079.9,327.1 1081.0,326.6 1082.0,326.1 1083.1,325.4 1084.2,324.5 1085.2,321.4 1086.3,319.5 1087.4,318.4 1088.4,318.2 1089.5,319.3 1090.6,320.3 1091.6,320.9 1092.7,321.7 1093.8,324.0 1094.8,325.8 1095.9,327.5 1097.0,327.6 1098.0,327.5 1099.1,327.0 1100.2,327.3 1101.2,326.4 1102.3,325.7 1103.4,325.4 1104.4,324.8 1105.5,324.1 1106.6,323.8 1107.6,324.1 1108.7,325.6 1109.8,326.3 1110.8,327.2 1111.9,327.8 1113.0,328.7 1114.0,329.9 1115.1,330.2 1116.2,329.8 1117.2,329.9 1118.3,329.0 1119.4,328.2 1120.4,327.1 1121.5,328.5 1122.6,328.1 1123.6,328.6 1124.7,329.1 1125.8,330.4 1126.8,331.0 1127.9,331.4 1129.0,331.0 1130.0,331.3 1131.1,331.9 1132.2,332.0 1133.2,332.2 1134.3,333.3 1135.4,335.0 1136.4,336.9 1137.5,337.9 1138.6,338.6 1139.6,340.0 1140.7,340.3 1141.8,341.5 1142.8,342.3 1143.9,343.4 1145.0,341.9 1146.0,340.5 1147.1,339.2 1148.2,339.4 1149.2,338.5 1150.3,337.8 1151.4,337.4 1152.4,336.8 1153.5,335.8 1154.6,337.3 1155.6,338.1 1156.7,338.9 1157.8,339.2 1158.8,339.0 1159.9,339.0 1161.0,339.2 1162.0,339.2 1163.1,338.0 1164.2,336.8 1165.2,335.1 1166.3,334.5 1167.4,333.7 1168.4,332.9 1169.5,332.2 1170.6,331.9 1171.6,331.6 1172.7,332.3 1173.8,332.4 1174.8,333.0 1175.9,333.4 1177.0,334.1 1178.0,332.6 1179.1,330.4 1180.2,328.7 1181.2,327.7 1182.3,327.0 1183.4,326.7 1184.4,326.1 1185.5,325.5 1186.6,324.2 1187.6,322.1 1188.7,319.8 1189.8,318.5 1190.8,318.5 1191.9,319.9 1193.0,320.1 1194.0,320.8 1195.1,321.8 1196.2,323.8 1197.2,325.8 1198.3,327.3 1199.4,327.6 1200.4,327.6 1201.5,326.9 1202.6,326.8 1203.6,326.1 1204.7,325.8 1205.8,324.9 1206.8,323.8 1207.9,323.7 1209.0,323.8 1210.0,324.8 1211.1,325.7 1212.2,326.8 1213.2,327.6 1214.3,328.8 1215.4,329.8 1216.4,330.0 1217.5,330.1 1218.6,330.2 1219.6,328.9 1220.7,328.7 1221.8,327.3 1222.8,327.6 1223.9,328.7 1225.0,328.6 1226.0,329.0 1227.1,330.3 1228.2,331.1 1229.2,330.7 1230.3,331.1 1231.4,331.5 1232.4,332.1 1233.5,332.4 1234.6,332.7 1235.6,333.4 1236.7,335.4 1237.8,337.1 1238.8,338.1 1239.9,338.5 1241.0,339.4 1242.0,340.2 1243.1,341.4 1244.2,342.2 1245.2,343.7 1246.3,342.2 1247.4,340.7 1248.4,339.7 1249.5,339.3 1250.6,338.4 1251.6,337.6 1252.7,337.5 1253.8,336.5 1254.8,336.3 1255.9,337.3 1257.0,338.5 1258.0,338.6 1259.1,339.2 1260.2,338.8 1261.2,338.7 1262.3,338.8 1263.4,339.0 1264.4,337.3 1265.5,336.0 1266.6,335.1 1267.6,334.2 1268.7,333.3 1269.8,332.8 1270.8,332.5 1271.9,332.3 1273.0,332.0 1274.0,332.4 1275.1,332.7 1276.2,333.3 1277.2,333.6 1278.3,333.3 1279.4,330.8 1280.4,329.4 1281.5,327.9 1282.6,327.0 1283.6,326.7 1284.7,326.7 1285.8,326.0 1286.8,325.4 1287.9,322.7 1289.0,320.1 1290.0,318.8 1291.1,318.4 1292.2,318.8 1293.2,320.3 1294.3,320.4 1295.4,322.0 1296.4,323.5 1297.5,324.8 1298.6,326.8 1299.6,328.1 1300.7,328.1 1301.8,327.3 1302.8,326.9 1303.9,326.4 1305.0,326.4 1306.0,325.3 1307.1,324.5 1308.2,323.5 1309.2,324.0 1310.3,324.8 1311.4,325.0 1312.4,326.6 1313.5,327.2 1314.6,328.6 1315.6,329.3 1316.7,329.7 1317.8,330.6 1318.8,330.0 1319.9,329.0 1321.0,328.4 1322.0,327.6 1323.1,327.7 1324.2,328.3 1325.2,328.0 1326.3,328.5 1327.4,329.5 1328.4,331.1 1329.5,330.6 1330.6,331.3 1331.6,331.6 1332.7,331.4 1333.8,332.4 1334.8,332.6 1335.9,333.2 1337.0,334.5 1338.0,336.3 1339.1,337.7 1340.2,338.9 1341.2,339.5 1342.3,340.2 1343.4,341.2 1344.4,342.1 1345.5,342.9 1346.6,342.2 1347.6,341.2 1348.7,339.5 1349.8,339.6 1350.8,338.4 1351.9,337.9 1353.0,337.5 1354.0,336.3 1355.1,336.0 1356.2,337.4 1357.2,338.5 1358.3,339.2 1359.4,339.1 1360.4,339.4 1361.5,339.4 1362.6,339.0 1363.6,339.0 1364.7,337.5 1365.8,336.4 1366.8,334.8 1367.9,334.5 1369.0,333.7 1370.0,332.7 1371.1,332.1 1372.2,332.4 1373.2,331.6 1374.3,332.2 1375.4,332.8 1376.4,333.3 1377.5,333.9 1378.6,333.8 1379.6,331.3 1380.7,329.8 1381.8,328.5 1382.8,327.7 1383.9,327.0 1385.0,326.4 1386.0,325.9 1387.1,325.2 1388.2,324.2 1389.2,321.3 1390.3,319.0 1391.4,318.6 1392.4,319.1 1393.5,319.6 1394.6,320.1 1395.6,320.7 1396.7,322.0 1397.8,323.9 1398.8,325.6 1399.9,327.1 1401.0,327.7 1402.0,327.6 1403.1,327.6 1404.2,327.2 1405.2,326.4 1406.3,325.8 1407.4,325.4 1408.4,324.1 1409.5,323.7 1410.6,323.7 1411.6,324.4 1412.7,325.9 1413.8,326.2 1414.8,327.3 1415.9,328.5 1417.0,329.6 1418.0,329.7 1419.1,330.1 1420.2,329.8 1421.2,329.3 1422.3,328.7 1423.4,328.0 1424.4,328.0 1425.5,328.7 1426.6,328.0 1427.6,328.2 1428.7,329.7 1429.8,331.1 1430.8,330.9 1431.9,331.1 1433.0,330.9 1434.0,331.6 1435.1,332.3 1436.2,332.6 1437.2,332.9 1438.3,334.5 1439.4,335.7 1440.4,337.3 1441.5,338.0 1442.6,339.0 1443.6,340.2 1444.7,341.2 1445.8,342.1 1446.8,343.0 1447.9,343.3 1449.0,341.7 1450.0,340.2 1451.1,339.1 1452.2,339.1 1453.2,338.1 1454.3,338.2 1455.4,337.2 1456.4,336.0 1457.5,336.1 1458.6,337.3 1459.6,338.6 1460.7,339.1 1461.8,338.7 1462.8,338.7 1463.9,339.1 1465.0,339.0 1466.0,338.7 1467.1,337.3 1468.2,335.9 1469.2,334.4 1470.3,334.0 1471.4,333.4 1472.4,333.2 1473.5,332.5 1474.6,332.4 1475.6,331.9 1476.7,332.1 1477.8,332.7 1478.8,333.8 1479.9,333.9 1481.0,333.2 1482.0,331.0 1483.1,329.6 1484.2,328.7 1485.2,327.6 1486.3,326.8 1487.4,326.8 1488.4,326.4 1489.5,325.2 1490.6,323.3 1491.6,320.9 1492.7,319.1 1493.8,318.3 1494.8,318.6 1495.9,319.9 1497.0,320.6 1498.0,321.0 1499.1,322.2 1500.2,324.6 1501.2,325.9 1502.3,327.7 1503.4,327.6 1504.4,327.3 1505.5,327.5 1506.6,326.8 1507.6,326.8 1508.7,325.8 1509.8,325.0 1510.8,323.9 1511.9,323.7 1513.0,324.2 1514.0,325.1 1515.1,325.4 1516.2,326.5 1517.2,327.2 1518.3,328.9 1519.4,329.1 1520.4,329.6 1521.5,329.9 1522.6,329.8 1523.6,329.6 1524.7,329.0 1525.8,327.6 1526.8,328.2 1527.9,328.8 1529.0,328.2 1530.0,328.4 1531.1,330.1 1532.2,331.0 1533.2,330.6 1534.3,331.2 1535.4,331.3 1536.4,331.6 1537.5,331.9 1538.6,332.1 1539.6,332.3 1540.7,334.3 1541.8,336.1 1542.8,338.1 1543.9,338.1 1545.0,339.6 1546.0,339.9 1547.1,340.9 1548.2,342.3 1549.2,343.3 1550.3,342.8 1551.4,341.0 1552.4,339.8 1553.5,339.3 1554.6,339.1 1555.6,338.0 1556.7,337.6 1557.8,337.2 1558.8,335.5 1559.9,336.5 1561.0,338.0 1562.0,338.9 1563.1,338.6 1564.2,338.6 1565.2,338.7 1566.3,339.4 1567.4,338.7 1568.4,339.0 1569.5,337.4 1570.6,335.3 1571.6,334.4 1572.7,334.4 1573.8,333.3 1574.8,332.5 1575.9,332.4 1577.0,331.9 1578.0,331.8 1579.1,332.0 1580.2,333.3 1581.2,333.9 1582.3,333.9 1583.4,333.3 1584.4,330.4 1585.5,329.0" fill="none" stroke="#000" stroke-width="1" stroke-linejoin="round"/>
<rect x="403.2" y="349" width="1278.9" height="252" fill="#fafafa"/>
<rect x="1221" y="349" width="153.8" height="252" fill="#ffff00"/>
<path d="M404 356.5 H1681.5" stroke="#d2d2d2" stroke-width="1.4"/>
<path d="M404 403.5 H1681.5" stroke="#d2d2d2" stroke-width="1.4"/>
<path d="M404 450.5 H1681.5" stroke="#d2d2d2" stroke-width="1.4"/>
<path d="M404 497.5 H1681.5" stroke="#d2d2d2" stroke-width="1.4"/>
<path d="M404 545.5 H1681.5" stroke="#d2d2d2" stroke-width="1.4"/>
<path d="M404 592.5 H1681.5" stroke="#d2d2d2" stroke-width="1.4"/>
<path d="M616.5 350 V600" stroke="#d2d2d2" stroke-width="1.4"/>
<path d="M829.5 350 V600" stroke="#d2d2d2" stroke-width="1.4"/>
<path d="M1043.5 350 V600" stroke="#d2d2d2" stroke-width="1.4"/>
<path d="M1256.5 350 V600" stroke="#d2d2d2" stroke-width="1.4"/>
<path d="M1469.5 350 V600" stroke="#d2d2d2" stroke-width="1.4"/>
<path d="M463.5 350 V600" stroke="#969696" stroke-width="1.4"/>
<text x="458.0" y="361.3" font-size="12" fill="#a0a0a0" text-anchor="end">1</text>
<path d="M614.5 350 V600" stroke="#969696" stroke-width="1.4"/>
<text x="609.0" y="361.3" font-size="12" fill="#a0a0a0" text-anchor="end">2</text>
<path d="M765.5 350 V600" stroke="#969696" stroke-width="1.4"/>
<text x="760.0" y="361.3" font-size="12" fill="#a0a0a0" text-anchor="end">3</text>
<path d="M919.5 350 V600" stroke="#969696" stroke-width="1.4"/>
<text x="914.0" y="361.3" font-size="12" fill="#a0a0a0" text-anchor="end">4</text>
<path d="M1070.5 350 V600" stroke="#969696" stroke-width="1.4"/>
<text x="1065.0" y="361.3" font-size="12" fill="#a0a0a0" text-anchor="end">5</text>
<path d="M1221.5 350 V600" stroke="#969696" stroke-width="1.4"/>
<text x="1216.0" y="361.3" font-size="12" fill="#a0a0a0" text-anchor="end">6</text>
<path d="M1374.5 350 V600" stroke="#969696" stroke-width="1.4"/>
<text x="1369.0" y="361.3" font-size="12" fill="#a0a0a0" text-anchor="end">7</text>
<polyline points="403.5,487.0 404.5,494.0 405.5,503.7 406.5,513.0 407.5,522.9 408.5,530.9 409.5,534.8 410.5,539.1 411.5,542.5 412.5,550.3 413.5,554.0 414.5,558.0 415.5,564.0 416.5,569.8 417.5,575.0 418.5,580.2 419.5,578.2 420.5,571.5 421.5,561.9 422.5,553.3 423.5,549.1 424.5,546.4 425.5,542.9 426.5,538.8 427.5,536.7 428.5,533.8 429.5,531.8 430.5,526.7 431.5,521.3 432.5,516.0 433.5,519.1 434.5,524.6 435.5,531.9 436.5,537.4 437.5,541.4 438.5,542.1 439.5,542.7 440.5,543.3 441.5,543.5 442.5,543.6 443.5,543.7 444.5,543.0 445.5,541.5 446.5,541.4 447.5,532.8 448.5,523.8 449.5,514.3 450.5,507.6 451.5,503.8 452.5,500.7 453.5,496.8 454.5,492.3 455.5,489.9 456.5,487.1 457.5,484.3 458.5,482.6 459.5,482.1 460.5,480.7 461.5,482.5 462.5,485.5 463.5,489.5 464.5,493.2 465.5,494.9 466.5,496.8 467.5,497.8 468.5,493.0 469.5,482.7 470.5,469.7 471.5,460.8 472.5,454.4 473.5,448.8 474.5,444.7 475.5,439.7 476.5,438.0 477.5,435.4 478.5,434.0 479.5,429.4 480.5,424.9 481.5,422.9 482.5,410.4 483.5,396.2 484.5,383.9 485.5,375.7 486.5,370.9 487.5,367.7 488.5,370.3 489.5,373.8 490.5,378.2 491.5,381.9 492.5,384.9 493.5,387.3 494.5,392.7 495.5,399.9 496.5,410.1 497.5,420.8 498.5,430.4 499.5,438.8 500.5,444.0 501.5,445.4 502.5,443.2 503.5,441.6 504.5,440.2 505.5,438.7 506.5,436.9 507.5,433.2 508.5,430.1 509.5,427.7 510.5,424.4 511.5,418.7 512.5,412.8 513.5,410.7 514.5,410.0 515.5,411.5 516.5,413.2 517.5,418.3 518.5,424.0 519.5,429.9 520.5,434.1 521.5,438.4 522.5,444.3 523.5,450.2 524.5,454.9 525.5,460.3 526.5,463.0 527.5,466.3 528.5,465.8 529.5,465.2 530.5,461.3 531.5,457.5 532.5,454.0 533.5,450.6 534.5,443.2 535.5,441.9 536.5,445.4 537.5,450.1 538.5,450.1 539.5,449.3 540.5,449.4 541.5,454.6 542.5,461.3 543.5,469.6 544.5,471.2 545.5,472.5 546.5,473.4 547.5,473.9 548.5,474.8 549.5,476.8 550.5,479.7 551.5,481.6 552.5,482.9 553.5,484.2 554.5,486.9 555.5,490.3 556.5,500.5 557.5,510.2 558.5,520.4 559.5,529.4 560.5,533.9 561.5,537.2 562.5,541.2 563.5,548.5 564.5,552.9 565.5,556.0 566.5,561.6 567.5,567.8 568.5,573.7 569.5,578.8 570.5,579.9 571.5,573.1 572.5,565.1 573.5,556.5 574.5,548.9 575.5,547.4 576.5,544.8 577.5,539.8 578.5,537.8 579.5,534.3 580.5,532.1 581.5,527.8 582.5,522.4 583.5,516.6 584.5,518.6 585.5,523.3 586.5,530.0 587.5,536.3 588.5,540.3 589.5,542.3 590.5,542.2 591.5,543.2 592.5,543.3 593.5,543.1 594.5,543.6 595.5,543.3 596.5,542.1 597.5,540.9 598.5,535.1 599.5,525.4 600.5,516.2 601.5,508.0 602.5,504.4 603.5,501.6 604.5,498.0 605.5,493.2 606.5,490.2 607.5,487.0 608.5,485.3 609.5,483.3 610.5,481.8 611.5,480.1 612.5,482.4 613.5,484.4 614.5,489.0 615.5,491.7 616.5,495.2 617.5,497.3 618.5,497.6 619.5,494.5 620.5,484.4 621.5,472.4 622.5,462.6 623.5,456.3 624.5,450.6 625.5,444.7 626.5,440.4 627.5,438.4 628.5,435.4 629.5,433.7 630.5,430.6 631.5,425.1 632.5,423.4 633.5,411.8 634.5,398.6 635.5,382.2 636.5,371.1 637.5,366.2 638.5,360.2 639.5,363.7 640.5,367.9 641.5,372.9 642.5,377.0 643.5,380.7 644.5,384.2 645.5,391.2 646.5,399.3 647.5,409.0 648.5,419.5 649.5,430.0 650.5,437.8 651.5,443.3 652.5,445.7 653.5,443.7 654.5,442.6 655.5,440.6 656.5,438.9 657.5,437.4 658.5,433.4 659.5,431.3 660.5,427.9 661.5,424.6 662.5,419.8 663.5,413.0 664.5,411.0 665.5,410.2 666.5,411.2 667.5,413.4 668.5,418.0 669.5,422.9 670.5,429.4 671.5,433.5 672.5,438.8 673.5,443.5 674.5,450.4 675.5,455.8 676.5,459.7 677.5,463.2 678.5,465.7 679.5,465.4 680.5,464.3 681.5,461.0 682.5,458.0 683.5,454.5 684.5,450.6 685.5,443.6 686.5,441.0 687.5,445.5 688.5,450.1 689.5,449.8 690.5,448.7 691.5,449.7 692.5,454.4 693.5,461.2 694.5,468.9 695.5,471.8 696.5,472.7 697.5,472.7 698.5,473.6 699.5,475.1 700.5,476.8 701.5,479.8 702.5,480.9 703.5,482.6 704.5,484.3 705.5,486.7 706.5,491.3 707.5,500.8 708.5,510.4 709.5,520.3 710.5,529.5 711.5,534.0 712.5,537.8 713.5,541.4 714.5,548.7 715.5,552.8 716.5,557.1 717.5,562.6 718.5,568.1 719.5,574.5 720.5,578.8 721.5,579.8 722.5,572.6 723.5,563.8 724.5,554.8 725.5,549.5 726.5,546.5 727.5,544.1 728.5,540.4 729.5,536.7 730.5,534.1 731.5,531.8 732.5,527.1 733.5,521.8 734.5,516.5 735.5,518.7 736.5,523.9 737.5,530.8 738.5,536.2 739.5,541.4 740.5,542.7 741.5,543.0 742.5,542.6 743.5,543.7 744.5,543.6 745.5,543.3 746.5,543.2 747.5,541.9 748.5,540.8 749.5,533.2 750.5,524.1 751.5,514.5 752.5,507.3 753.5,504.6 754.5,501.3 755.5,497.7 756.5,493.1 757.5,489.3 758.5,487.1 759.5,484.5 760.5,483.1 761.5,481.6 762.5,480.4 763.5,482.9 764.5,485.6 765.5,489.0 766.5,493.0 767.5,494.7 768.5,496.5 769.5,497.1 770.5,493.6 771.5,484.3 772.5,471.6 773.5,462.2 774.5,456.2 775.5,450.0 776.5,444.9 777.5,440.7 778.5,438.2 779.5,436.3 780.5,434.3 781.5,431.5 782.5,425.9 783.5,423.8 784.5,415.0 785.5,401.8 786.5,386.3 787.5,373.9 788.5,367.3 789.5,361.8 790.5,362.5 791.5,366.4 792.5,370.8 793.5,376.6 794.5,379.2 795.5,382.6 796.5,386.6 797.5,395.7 798.5,402.9 799.5,413.7 800.5,424.6 801.5,433.0 802.5,441.1 803.5,445.1 804.5,445.1 805.5,443.5 806.5,441.1 807.5,440.0 808.5,438.2 809.5,436.5 810.5,433.4 811.5,430.5 812.5,426.6 813.5,424.5 814.5,418.7 815.5,413.3 816.5,409.6 817.5,410.0 818.5,411.0 819.5,413.0 820.5,418.8 821.5,423.8 822.5,429.3 823.5,434.3 824.5,438.5 825.5,443.2 826.5,449.3 827.5,454.4 828.5,459.4 829.5,462.3 830.5,465.2 831.5,466.1 832.5,464.5 833.5,461.9 834.5,458.5 835.5,455.6 836.5,452.3 837.5,445.2 838.5,440.5 839.5,444.4 840.5,448.8 841.5,450.8 842.5,449.2 843.5,448.6 844.5,452.5 845.5,458.0 846.5,465.2 847.5,471.5 848.5,472.1 849.5,472.5 850.5,473.6 851.5,473.5 852.5,476.3 853.5,477.6 854.5,479.5 855.5,481.4 856.5,483.8 857.5,485.8 858.5,486.4 859.5,493.2 860.5,502.7 861.5,512.9 862.5,522.0 863.5,530.6 864.5,534.2 865.5,538.5 866.5,541.7 867.5,549.6 868.5,552.8 869.5,556.4 870.5,562.6 871.5,568.3 872.5,573.5 873.5,579.2 874.5,579.8 875.5,573.7 876.5,565.3 877.5,556.7 878.5,549.7 879.5,547.3 880.5,544.8 881.5,540.7 882.5,538.2 883.5,534.6 884.5,532.9 885.5,528.2 886.5,523.0 887.5,517.7 888.5,518.4 889.5,521.5 890.5,528.1 891.5,535.3 892.5,538.8 893.5,542.2 894.5,542.6 895.5,543.2 896.5,543.6 897.5,543.5 898.5,543.2 899.5,543.2 900.5,542.2 901.5,542.0 902.5,539.9 903.5,530.9 904.5,521.1 905.5,512.3 906.5,506.9 907.5,503.6 908.5,500.0 909.5,496.3 910.5,492.5 911.5,488.9 912.5,486.3 913.5,484.0 914.5,482.9 915.5,481.9 916.5,480.4 917.5,482.5 918.5,484.9 919.5,489.1 920.5,492.6 921.5,495.0 922.5,496.6 923.5,497.1 924.5,493.1 925.5,482.4 926.5,469.7 927.5,461.5 928.5,454.3 929.5,449.0 930.5,444.7 931.5,439.9 932.5,437.8 933.5,435.5 934.5,433.2 935.5,429.5 936.5,424.7 937.5,422.3 938.5,409.6 939.5,395.2 940.5,380.0 941.5,370.5 942.5,365.1 943.5,361.0 944.5,364.6 945.5,368.7 946.5,373.5 947.5,378.1 948.5,381.4 949.5,385.4 950.5,392.4 951.5,400.1 952.5,410.2 953.5,421.6 954.5,430.7 955.5,439.0 956.5,444.0 957.5,445.7 958.5,443.9 959.5,442.2 960.5,440.7 961.5,438.8 962.5,436.8 963.5,433.5 964.5,430.2 965.5,427.6 966.5,424.0 967.5,418.7 968.5,413.3 969.5,410.4 970.5,410.4 971.5,411.2 972.5,413.5 973.5,418.5 974.5,423.9 975.5,429.5 976.5,434.6 977.5,439.3 978.5,444.0 979.5,450.9 980.5,455.9 981.5,459.9 982.5,463.2 983.5,466.6 984.5,465.4 985.5,464.7 986.5,460.8 987.5,458.0 988.5,454.9 989.5,450.2 990.5,442.3 991.5,441.8 992.5,446.1 993.5,450.4 994.5,450.3 995.5,449.4 996.5,450.4 997.5,455.1 998.5,461.6 999.5,470.0 1000.5,471.4 1001.5,472.8 1002.5,472.9 1003.5,473.7 1004.5,474.8 1005.5,477.8 1006.5,479.2 1007.5,480.7 1008.5,482.7 1009.5,484.7 1010.5,486.0 1011.5,490.9 1012.5,500.6 1013.5,510.9 1014.5,520.5 1015.5,529.8 1016.5,533.6 1017.5,538.0 1018.5,542.1 1019.5,548.6 1020.5,552.5 1021.5,556.9 1022.5,562.2 1023.5,568.0 1024.5,573.6 1025.5,579.6 1026.5,580.2 1027.5,573.0 1028.5,564.2 1029.5,555.5 1030.5,549.0 1031.5,547.6 1032.5,544.0 1033.5,540.2 1034.5,537.5 1035.5,534.8 1036.5,531.8 1037.5,527.0 1038.5,521.9 1039.5,515.9 1040.5,519.3 1041.5,523.6 1042.5,531.1 1043.5,536.2 1044.5,540.6 1045.5,542.1 1046.5,542.7 1047.5,542.8 1048.5,542.8 1049.5,543.6 1050.5,543.1 1051.5,542.7 1052.5,541.8 1053.5,541.1 1054.5,534.2 1055.5,525.2 1056.5,515.9 1057.5,507.6 1058.5,505.0 1059.5,501.8 1060.5,497.1 1061.5,493.6 1062.5,490.2 1063.5,487.6 1064.5,484.4 1065.5,483.3 1066.5,481.8 1067.5,480.0 1068.5,482.1 1069.5,485.2 1070.5,489.1 1071.5,492.1 1072.5,494.7 1073.5,496.4 1074.5,497.1 1075.5,493.6 1076.5,483.2 1077.5,470.5 1078.5,462.1 1079.5,455.5 1080.5,449.2 1081.5,444.9 1082.5,439.8 1083.5,438.0 1084.5,435.9 1085.5,434.1 1086.5,430.0 1087.5,425.6 1088.5,422.4 1089.5,410.7 1090.5,396.5 1091.5,381.1 1092.5,370.4 1093.5,365.5 1094.5,361.0 1095.5,364.1 1096.5,368.2 1097.5,373.4 1098.5,377.9 1099.5,381.0 1100.5,385.0 1101.5,391.4 1102.5,400.1 1103.5,410.0 1104.5,421.3 1105.5,431.1 1106.5,438.8 1107.5,444.1 1108.5,445.3 1109.5,443.7 1110.5,442.1 1111.5,440.7 1112.5,438.5 1113.5,436.5 1114.5,434.0 1115.5,429.9 1116.5,427.5 1117.5,424.5 1118.5,418.1 1119.5,413.0 1120.5,410.2 1121.5,410.8 1122.5,411.3 1123.5,414.3 1124.5,418.8 1125.5,424.0 1126.5,430.3 1127.5,434.1 1128.5,439.3 1129.5,444.8 1130.5,450.9 1131.5,456.3 1132.5,460.1 1133.5,463.4 1134.5,466.3 1135.5,466.1 1136.5,464.1 1137.5,460.8 1138.5,457.3 1139.5,454.2 1140.5,449.9 1141.5,441.8 1142.5,442.4 1143.5,446.3 1144.5,450.6 1145.5,449.9 1146.5,449.1 1147.5,451.1 1148.5,455.8 1149.5,462.8 1150.5,470.2 1151.5,471.6 1152.5,472.5 1153.5,473.2 1154.5,473.6 1155.5,475.8 1156.5,477.1 1157.5,479.9 1158.5,481.9 1159.5,483.3 1160.5,484.5 1161.5,486.6 1162.5,491.9 1163.5,501.8 1164.5,512.6 1165.5,522.3 1166.5,530.8 1167.5,534.8 1168.5,538.8 1169.5,542.4 1170.5,549.8 1171.5,553.6 1172.5,557.5 1173.5,563.4 1174.5,569.6 1175.5,574.7 1176.5,580.4 1177.5,578.5 1178.5,571.7 1179.5,562.1 1180.5,553.4 1181.5,548.3 1182.5,547.0 1183.5,543.8 1184.5,539.5 1185.5,536.5 1186.5,534.3 1187.5,531.5 1188.5,526.2 1189.5,520.4 1190.5,516.1 1191.5,519.6 1192.5,525.1 1193.5,532.2 1194.5,537.6 1195.5,542.2 1196.5,542.0 1197.5,542.9 1198.5,542.7 1199.5,542.9 1200.5,543.7 1201.5,543.4 1202.5,543.2 1203.5,541.7 1204.5,540.4 1205.5,531.8 1206.5,522.7 1207.5,513.7 1208.5,507.4 1209.5,503.7 1210.5,500.4 1211.5,496.0 1212.5,492.2 1213.5,488.7 1214.5,486.2 1215.5,483.5 1216.5,482.0 1217.5,481.5 1218.5,480.7 1219.5,483.7 1220.5,485.5 1221.5,490.5 1222.5,492.7 1223.5,495.3 1224.5,497.2 1225.5,497.3 1226.5,491.8 1227.5,480.5 1228.5,468.8 1229.5,460.6 1230.5,454.7 1231.5,449.4 1232.5,444.3 1233.5,439.1 1234.5,437.7 1235.5,435.8 1236.5,433.6 1237.5,430.1 1238.5,425.0 1239.5,423.3 1240.5,411.4 1241.5,397.0 1242.5,381.7 1243.5,371.2 1244.5,366.1 1245.5,360.1 1246.5,363.6 1247.5,367.9 1248.5,372.4 1249.5,377.5 1250.5,380.6 1251.5,383.6 1252.5,389.3 1253.5,397.8 1254.5,406.4 1255.5,417.8 1256.5,427.4 1257.5,436.5 1258.5,442.0 1259.5,446.1 1260.5,444.5 1261.5,442.6 1262.5,440.9 1263.5,439.7 1264.5,438.2 1265.5,435.4 1266.5,432.1 1267.5,428.8 1268.5,425.6 1269.5,423.0 1270.5,416.1 1271.5,412.2 1272.5,409.3 1273.5,410.8 1274.5,412.4 1275.5,415.7 1276.5,420.4 1277.5,425.4 1278.5,431.2 1279.5,436.1 1280.5,439.9 1281.5,446.2 1282.5,452.4 1283.5,457.0 1284.5,461.2 1285.5,463.5 1286.5,466.1 1287.5,465.4 1288.5,464.1 1289.5,460.8 1290.5,457.6 1291.5,454.6 1292.5,449.0 1293.5,442.6 1294.5,442.3 1295.5,446.6 1296.5,450.4 1297.5,450.0 1298.5,449.6 1299.5,450.3 1300.5,455.1 1301.5,461.7 1302.5,468.8 1303.5,471.2 1304.5,472.6 1305.5,473.3 1306.5,473.0 1307.5,475.2 1308.5,477.4 1309.5,478.7 1310.5,481.0 1311.5,482.8 1312.5,484.3 1313.5,485.8 1314.5,488.3 1315.5,498.3 1316.5,508.1 1317.5,517.6 1318.5,527.0 1319.5,532.9 1320.5,536.7 1321.5,539.9 1322.5,545.8 1323.5,551.8 1324.5,555.5 1325.5,559.7 1326.5,565.6 1327.5,571.6 1328.5,576.4 1329.5,581.6 1330.5,576.1 1331.5,569.1 1332.5,560.0 1333.5,551.6 1334.5,548.2 1335.5,546.3 1336.5,542.1 1337.5,538.3 1338.5,536.7 1339.5,533.4 1340.5,530.5 1341.5,525.7 1342.5,520.5 1343.5,516.2 1344.5,520.0 1345.5,525.4 1346.5,532.4 1347.5,536.9 1348.5,541.1 1349.5,543.0 1350.5,543.2 1351.5,543.2 1352.5,543.4 1353.5,543.1 1354.5,543.7 1355.5,542.8 1356.5,542.4 1357.5,541.4 1358.5,534.2 1359.5,525.2 1360.5,515.2 1361.5,507.2 1362.5,504.3 1363.5,501.1 1364.5,497.3 1365.5,493.0 1366.5,490.0 1367.5,487.9 1368.5,485.0 1369.5,483.5 1370.5,482.3 1371.5,480.2 1372.5,482.3 1373.5,484.2 1374.5,487.6 1375.5,492.3 1376.5,494.2 1377.5,496.7 1378.5,497.4 1379.5,496.1 1380.5,487.5 1381.5,473.7 1382.5,464.6 1383.5,456.8 1384.5,452.1 1385.5,446.9 1386.5,441.2 1387.5,438.0 1388.5,436.3 1389.5,434.4 1390.5,432.6 1391.5,427.3 1392.5,424.3 1393.5,417.1 1394.5,404.2 1395.5,389.5 1396.5,375.7 1397.5,368.7 1398.5,362.4 1399.5,361.9 1400.5,366.0 1401.5,370.9 1402.5,375.8 1403.5,378.9 1404.5,382.7 1405.5,386.4 1406.5,393.7 1407.5,401.8 1408.5,412.5 1409.5,423.5 1410.5,432.5 1411.5,440.0 1412.5,444.2 1413.5,444.6 1414.5,443.6 1415.5,441.2 1416.5,440.3 1417.5,438.1 1418.5,435.8 1419.5,433.7 1420.5,429.9 1421.5,427.7 1422.5,424.7 1423.5,419.0 1424.5,412.5 1425.5,410.1 1426.5,409.8 1427.5,411.9 1428.5,413.8 1429.5,418.5 1430.5,423.3 1431.5,429.0 1432.5,434.4 1433.5,438.4 1434.5,443.7 1435.5,449.5 1436.5,454.7 1437.5,458.8 1438.5,463.0 1439.5,465.6 1440.5,465.7 1441.5,465.4 1442.5,461.7 1443.5,458.4 1444.5,454.8 1445.5,451.9 1446.5,445.2 1447.5,440.2 1448.5,444.4 1449.5,448.8 1450.5,450.4 1451.5,450.0 1452.5,448.2 1453.5,453.7 1454.5,458.1 1455.5,466.8 1456.5,471.5 1457.5,471.9 1458.5,472.9 1459.5,473.0 1460.5,473.9 1461.5,475.9 1462.5,478.2 1463.5,480.8 1464.5,482.6 1465.5,484.3 1466.5,485.1 1467.5,487.1 1468.5,495.4 1469.5,504.2 1470.5,514.8 1471.5,524.2 1472.5,531.9 1473.5,534.7 1474.5,539.3 1475.5,543.3 1476.5,549.8 1477.5,553.4 1478.5,558.3 1479.5,563.9 1480.5,569.5 1481.5,575.2 1482.5,580.9 1483.5,578.1 1484.5,571.4 1485.5,562.2 1486.5,553.6 1487.5,549.2 1488.5,547.1 1489.5,543.3 1490.5,539.1 1491.5,536.5 1492.5,534.4 1493.5,531.6 1494.5,526.7 1495.5,521.2 1496.5,516.3 1497.5,519.3 1498.5,524.2 1499.5,530.7 1500.5,536.0 1501.5,540.1 1502.5,542.6 1503.5,542.6 1504.5,543.4 1505.5,542.9 1506.5,543.7 1507.5,543.2 1508.5,543.4 1509.5,542.6 1510.5,541.3 1511.5,535.4 1512.5,527.2 1513.5,517.6 1514.5,508.8 1515.5,505.0 1516.5,501.8 1517.5,499.1 1518.5,494.3 1519.5,490.1 1520.5,487.9 1521.5,485.6 1522.5,482.7 1523.5,482.1 1524.5,480.9 1525.5,481.8 1526.5,483.5 1527.5,487.5 1528.5,491.6 1529.5,494.4 1530.5,496.3 1531.5,497.4 1532.5,496.7 1533.5,488.7 1535.5,478.0 1537.3,457.7" fill="none" stroke="#000" stroke-width="1.15" stroke-linejoin="round"/>
<rect x="403.2" y="349" width="1278.9" height="252" fill="none" stroke="#000" stroke-width="2"/>
<path d="M396.8 592.5 H403" stroke="#000" stroke-width="1.4"/>
<path d="M399.8 580.5 H403" stroke="#000" stroke-width="1"/>
<path d="M399.8 569.5 H403" stroke="#000" stroke-width="1"/>
<path d="M399.8 557.5 H403" stroke="#000" stroke-width="1"/>
<path d="M396.8 545.5 H403" stroke="#000" stroke-width="1.4"/>
<path d="M399.8 533.5 H403" stroke="#000" stroke-width="1"/>
<path d="M399.8 521.5 H403" stroke="#000" stroke-width="1"/>
<path d="M399.8 510.5 H403" stroke="#000" stroke-width="1"/>
<path d="M396.8 498.5 H403" stroke="#000" stroke-width="1.4"/>
<path d="M399.8 486.5 H403" stroke="#000" stroke-width="1"/>
<path d="M399.8 474.5 H403" stroke="#000" stroke-width="1"/>
<path d="M399.8 462.5 H403" stroke="#000" stroke-width="1"/>
<path d="M396.8 450.5 H403" stroke="#000" stroke-width="1.4"/>
<path d="M399.8 439.5 H403" stroke="#000" stroke-width="1"/>
<path d="M399.8 427.5 H403" stroke="#000" stroke-width="1"/>
<path d="M399.8 415.5 H403" stroke="#000" stroke-width="1"/>
<path d="M396.8 403.5 H403" stroke="#000" stroke-width="1.4"/>
<path d="M399.8 391.5 H403" stroke="#000" stroke-width="1"/>
<path d="M399.8 380.5 H403" stroke="#000" stroke-width="1"/>
<path d="M399.8 368.5 H403" stroke="#000" stroke-width="1"/>
<path d="M396.8 356.5 H403" stroke="#000" stroke-width="1.4"/>
<text x="394.6" y="359.7" font-size="12.3" font-weight="bold" text-anchor="end">4</text>
<text x="394.6" y="406.9" font-size="12.3" font-weight="bold" text-anchor="end">2</text>
<text x="394.6" y="454.2" font-size="12.3" font-weight="bold" text-anchor="end">0</text>
<text x="394.6" y="501.5" font-size="12.3" font-weight="bold" text-anchor="end">-2</text>
<text x="394.6" y="548.7" font-size="12.3" font-weight="bold" text-anchor="end">-4</text>
<text x="394.6" y="596.0" font-size="12.3" font-weight="bold" text-anchor="end">-6</text>
<path d="M403.2 602 V608.5" stroke="#000" stroke-width="1.6"/>
<path d="M438.5 602 V605.5" stroke="#000" stroke-width="1"/>
<path d="M473.5 602 V605.5" stroke="#000" stroke-width="1"/>
<path d="M509.5 602 V605.5" stroke="#000" stroke-width="1"/>
<path d="M545.5 602 V605.5" stroke="#000" stroke-width="1"/>
<path d="M580.5 602 V605.5" stroke="#000" stroke-width="1"/>
<path d="M616.5 602 V608.5" stroke="#000" stroke-width="1.6"/>
<path d="M651.5 602 V605.5" stroke="#000" stroke-width="1"/>
<path d="M687.5 602 V605.5" stroke="#000" stroke-width="1"/>
<path d="M722.5 602 V605.5" stroke="#000" stroke-width="1"/>
<path d="M758.5 602 V605.5" stroke="#000" stroke-width="1"/>
<path d="M793.5 602 V605.5" stroke="#000" stroke-width="1"/>
<path d="M829.5 602 V608.5" stroke="#000" stroke-width="1.6"/>
<path d="M865.5 602 V605.5" stroke="#000" stroke-width="1"/>
<path d="M900.5 602 V605.5" stroke="#000" stroke-width="1"/>
<path d="M936.5 602 V605.5" stroke="#000" stroke-width="1"/>
<path d="M971.5 602 V605.5" stroke="#000" stroke-width="1"/>
<path d="M1007.5 602 V605.5" stroke="#000" stroke-width="1"/>
<path d="M1042.5 602 V608.5" stroke="#000" stroke-width="1.6"/>
<path d="M1078.5 602 V605.5" stroke="#000" stroke-width="1"/>
<path d="M1113.5 602 V605.5" stroke="#000" stroke-width="1"/>
<path d="M1149.5 602 V605.5" stroke="#000" stroke-width="1"/>
<path d="M1185.5 602 V605.5" stroke="#000" stroke-width="1"/>
<path d="M1220.5 602 V605.5" stroke="#000" stroke-width="1"/>
<path d="M1256.5 602 V608.5" stroke="#000" stroke-width="1.6"/>
<path d="M1291.5 602 V605.5" stroke="#000" stroke-width="1"/>
<path d="M1327.5 602 V605.5" stroke="#000" stroke-width="1"/>
<path d="M1362.5 602 V605.5" stroke="#000" stroke-width="1"/>
<path d="M1398.5 602 V605.5" stroke="#000" stroke-width="1"/>
<path d="M1433.5 602 V605.5" stroke="#000" stroke-width="1"/>
<path d="M1469.5 602 V608.5" stroke="#000" stroke-width="1.6"/>
<path d="M1505.5 602 V605.5" stroke="#000" stroke-width="1"/>
<path d="M1540.5 602 V605.5" stroke="#000" stroke-width="1"/>
<path d="M1576.5 602 V605.5" stroke="#000" stroke-width="1"/>
<path d="M1611.5 602 V605.5" stroke="#000" stroke-width="1"/>
<path d="M1647.5 602 V605.5" stroke="#000" stroke-width="1"/>
<path d="M1682.5 602 V608.5" stroke="#000" stroke-width="1.6"/>
<text x="402.3" y="620.3" font-size="12.2" font-weight="bold" text-anchor="middle">00:30</text>
<text x="615.6" y="620.3" font-size="12.2" font-weight="bold" text-anchor="middle">00:40</text>
<text x="829.0" y="620.3" font-size="12.2" font-weight="bold" text-anchor="middle">00:50</text>
<text x="1042.3" y="620.3" font-size="12.2" font-weight="bold" text-anchor="middle">01:00</text>
<text x="1255.6" y="620.3" font-size="12.2" font-weight="bold" text-anchor="middle">01:10</text>
<text x="1469.0" y="620.3" font-size="12.2" font-weight="bold" text-anchor="middle">01:20</text>
<text x="1682.3" y="620.3" font-size="12.2" font-weight="bold" text-anchor="middle">01:30</text>
<text x="350" y="620.3" font-size="12.2" font-weight="bold">Time</text>
<text transform="translate(355.5,477.0) rotate(-90)" font-size="12.2" font-weight="bold" text-anchor="middle">Klb</text>
<text x="1630" y="381" font-size="16" font-weight="bold" fill="#ee0000">LIVE</text>
<rect x="403.6" y="670.3" width="1278.5" height="26.90000000000009" fill="#fafafa" stroke="#000" stroke-width="1.1"/>
<rect x="404.1" y="670.8" width="425.2" height="25.90000000000009" fill="#d3d3d3"/>
<path d="M829.6 670.8 V696.7" stroke="#000" stroke-width="1"/>
<polyline points="404.0,693.4 683.2,693.4 684.5,675.4 688.3,674.9 693.0,673.3 698.1,671.5 701.2,674.4 703.8,682.6 705.8,690.8 707.9,695.0 710.5,695.6 711.5,696.0 712.6,696.0 713.7,695.3 714.7,695.1 715.8,695.0 716.9,694.6 717.9,693.9 719.0,694.4 720.1,693.2 721.1,692.7 722.2,692.1 723.3,691.3 724.3,690.7 725.4,690.0 726.5,689.1 727.5,689.1 728.6,688.3 729.7,687.2 730.7,686.9 731.8,685.7 732.9,684.9 733.9,684.2 735.0,683.0 736.1,682.7 737.1,681.7 738.2,680.7 739.3,680.1 740.3,680.4 741.4,680.8 742.5,681.3 743.5,681.8 744.6,682.9 745.7,683.6 746.7,684.6 747.8,686.0 748.9,686.6 749.9,687.3 751.0,687.5 752.1,687.3 753.1,688.2 754.2,688.7 755.3,688.7 756.3,689.1 757.4,689.9 758.5,690.2 759.5,691.2 760.6,692.3 761.7,692.6 762.7,693.4 763.8,692.4 764.9,692.2 765.9,692.2 767.0,692.5 768.1,692.1 769.1,691.3 770.2,691.5 771.3,691.0 772.3,690.1 773.4,690.3 774.5,689.8 775.5,689.4 776.6,688.3 777.7,688.1 778.7,688.0 779.8,687.4 780.9,687.0 781.9,685.7 783.0,684.9 784.1,684.0 785.1,683.1 786.2,683.1 787.3,684.2 788.3,684.2 789.4,684.7 790.5,685.4 791.5,687.1 792.6,689.2 793.7,690.8 794.7,690.7 795.8,691.5 796.9,691.3 797.9,691.7 799.0,691.6 800.1,691.7 801.1,691.8 802.2,691.6 803.3,691.5 804.3,691.9 805.4,692.5 806.5,694.7 807.5,693.8 808.6,694.8 809.7,695.6 810.7,695.4 811.8,695.9 812.9,696.0 813.9,695.6 815.0,695.0 816.1,695.0 817.1,694.9 818.2,694.2 819.3,694.0 820.3,693.5 821.4,693.1 822.5,692.7 823.5,692.1 824.6,690.8 825.7,690.2 826.7,690.1 827.8,689.4 828.9,689.0 829.9,688.3 831.0,687.5 832.1,686.2 833.1,685.5 834.2,684.6 835.3,683.9 836.3,683.1 837.4,682.1 838.5,681.3 839.5,680.6 840.6,680.1 841.7,680.5 842.7,680.9 843.8,681.8 844.9,681.9 845.9,683.2 847.0,684.4 848.1,684.7 849.1,686.2 850.2,687.1 851.3,687.1 852.3,687.7 853.4,687.5 854.5,688.3 855.5,688.2 856.6,688.6 857.7,689.6 858.7,689.7 859.8,690.2 860.9,691.4 861.9,692.0 863.0,693.1 864.1,693.0 865.1,692.3 866.2,692.7 867.3,692.4 868.3,691.8 869.4,691.2 870.5,691.0 871.5,691.3 872.6,690.7 873.7,690.9 874.7,690.2 875.8,689.3 876.9,689.1 877.9,688.5 879.0,688.3 880.1,687.8 881.1,687.6 882.2,686.9 883.3,686.0 884.3,684.3 885.4,684.0 886.5,683.0 887.5,683.7 888.6,683.9 889.7,684.1 890.7,684.9 891.8,685.8 892.9,687.5 893.9,689.9 895.0,691.1 896.1,691.3 897.1,691.4 898.2,691.5 899.3,691.6 900.3,692.0 901.4,691.5 902.5,691.4 903.5,691.6 904.6,691.6 905.7,691.8 906.7,693.5 907.8,694.4 908.9,694.4 909.9,695.1 911.0,695.2 912.1,695.8 913.1,695.5 914.2,695.7 915.3,695.5 916.3,694.8 917.4,695.4 918.5,694.5 919.5,694.6 920.6,694.5 921.7,694.0 922.7,692.8 923.8,692.5 924.9,692.3 925.9,690.3 927.0,690.3 928.1,689.7 929.1,689.0 930.2,689.1 931.3,688.0 932.3,687.1 933.4,686.3 934.5,685.0 935.5,684.3 936.6,683.6 937.7,682.5 938.7,681.6 939.8,681.2 940.9,680.5 941.9,680.8 943.0,680.8 944.1,681.4 945.1,681.6 946.2,682.6 947.3,683.7 948.3,684.5 949.4,685.5 950.5,687.0 951.5,687.6 952.6,687.3 953.7,687.4 954.7,688.0 955.8,688.7 956.9,688.6 957.9,689.1 959.0,689.8 960.1,689.7 961.1,690.9 962.2,692.2 963.3,692.5 964.3,693.5 965.4,692.5 966.5,692.7 967.5,692.4 968.6,692.5 969.7,692.3 970.7,691.2 971.8,691.2 972.9,690.6 973.9,690.2 975.0,690.5 976.1,689.5 977.1,688.9 978.2,688.4 979.3,688.3 980.3,688.0 981.4,687.5 982.5,687.5 983.5,686.3 984.6,684.7 985.7,684.0 986.7,683.6 987.8,683.1 988.9,683.8 989.9,683.5 991.0,684.1 992.1,685.4 993.1,686.8 994.2,688.9 995.3,690.2 996.3,691.1 997.4,691.5 998.5,691.3 999.5,691.7 1000.6,691.8 1001.7,692.1 1002.7,691.6 1003.8,691.5 1004.9,691.3 1005.9,691.6 1007.0,692.7 1008.1,694.0 1009.1,693.7 1010.2,694.6 1011.3,695.5 1012.3,695.9 1013.4,696.0 1014.5,695.9 1015.5,695.2 1016.6,694.8 1017.7,695.3 1018.7,694.7 1019.8,694.6 1020.9,694.2 1021.9,693.5 1023.0,693.1 1024.1,692.4 1025.1,692.6 1026.2,691.0 1027.3,690.4 1028.3,690.0 1029.4,689.0 1030.5,688.6 1031.5,688.4 1032.6,687.4 1033.7,686.7 1034.7,685.2 1035.8,684.6 1036.9,683.6 1037.9,682.6 1039.0,682.3 1040.1,681.6 1041.1,680.6 1042.2,680.7 1043.3,680.8 1044.3,681.0 1045.4,681.9 1046.5,682.7 1047.5,683.4 1048.6,684.6 1049.7,684.9 1050.7,686.2 1051.8,687.3 1052.9,687.1 1053.9,687.1 1055.0,688.1 1056.1,688.2 1057.1,688.8 1058.2,688.8 1059.3,689.2 1060.3,689.7 1061.4,690.5 1062.5,692.0 1063.5,692.0 1064.6,693.5 1065.7,692.8 1066.7,692.5 1067.8,692.2 1068.9,692.2 1069.9,691.6 1071.0,690.6 1072.1,691.5 1073.1,690.9 1074.2,690.3 1075.3,690.5 1076.3,689.6 1077.4,689.1 1078.5,688.5 1079.5,688.4 1080.6,687.9 1081.7,687.5 1082.7,687.5 1083.8,686.4 1084.9,685.5 1085.9,684.8 1087.0,683.3 1088.1,683.3 1089.1,683.7 1090.2,684.0 1091.3,683.7 1092.3,684.4 1093.4,685.8 1094.5,687.2 1095.5,689.7 1096.6,690.4 1097.7,691.5 1098.7,691.4 1099.8,691.3 1100.9,691.6 1101.9,691.5 1103.0,691.9 1104.1,691.3 1105.1,691.9 1106.2,691.7 1107.3,691.8 1108.3,692.4 1109.4,694.4 1110.5,693.8 1111.5,695.2 1112.6,695.1 1113.7,695.7 1114.7,695.9 1115.8,695.5 1116.9,695.8 1117.9,695.1 1119.0,695.2 1120.1,695.0 1121.1,694.4 1122.2,694.2 1123.3,693.6 1124.3,693.1 1125.4,693.2 1126.5,692.3 1127.5,691.6 1128.6,690.2 1129.7,690.5 1130.7,689.3 1131.8,689.0 1132.9,688.4 1133.9,687.3 1135.0,686.8 1136.1,685.5 1137.1,684.6 1138.2,684.4 1139.3,683.3 1140.3,682.5 1141.4,682.0 1142.5,681.4 1143.5,680.9 1144.6,680.7 1145.7,680.3 1146.7,681.1 1147.8,681.6 1148.9,682.8 1149.9,683.8 1151.0,684.2 1152.1,685.2 1153.1,686.6 1154.2,687.3 1155.3,687.1 1156.3,687.6 1157.4,687.7 1158.5,688.3 1159.5,688.3 1160.6,688.7 1161.7,689.8 1162.7,690.0 1163.8,690.9 1164.9,691.2 1165.9,691.8 1167.0,692.9 1168.1,693.0 1169.1,692.4 1170.2,692.2 1171.3,691.9 1172.3,691.9 1173.4,691.4 1174.5,690.9 1175.5,691.5 1176.6,690.6 1177.7,690.8 1178.7,689.8 1179.8,689.3 1180.9,689.1 1181.9,688.2 1183.0,687.6 1184.1,688.1 1185.1,687.6 1186.2,686.6 1187.3,685.3 1188.3,684.8 1189.4,683.7 1190.5,683.0 1191.5,683.2 1192.6,683.5 1193.7,684.3 1194.7,684.3 1195.8,686.1 1196.9,687.8 1197.9,689.4 1199.0,690.9 1200.1,691.1 1201.1,691.7 1202.2,691.8 1203.3,691.5 1204.3,691.5 1205.4,692.0 1206.5,691.5 1207.5,691.9 1208.6,691.9 1209.7,692.2 1210.7,693.6 1211.8,694.2 1212.9,694.4 1213.9,694.8 1215.0,695.7 1216.1,695.9 1217.1,695.8 1218.2,696.0 1219.3,695.1 1220.3,695.3 1221.4,694.7 1222.5,694.8 1223.5,694.6 1224.6,694.0 1225.7,693.6 1226.7,693.4 1227.8,692.7 1228.9,691.9 1229.9,690.4 1231.0,690.3 1232.1,689.5 1233.1,688.9 1234.2,688.5 1235.3,687.6 1236.3,686.7 1237.4,686.0 1238.5,685.1 1239.5,684.0 1240.6,683.3 1241.7,682.6 1242.7,681.6 1243.8,681.5 1244.9,680.4 1245.9,680.2 1247.0,681.0 1248.1,681.1 1249.1,682.0 1250.2,682.6 1251.3,684.0 1252.3,684.5 1253.4,685.7 1254.5,686.5 1255.5,687.3 1256.6,687.4 1257.7,687.4 1258.7,688.1 1259.8,688.6 1260.9,688.4 1261.9,689.0 1263.0,689.5 1264.1,689.8 1265.1,690.8 1266.2,691.7 1267.3,692.0 1268.3,693.6 1269.4,692.7 1270.5,692.1 1271.5,692.1 1272.6,692.2 1273.7,691.8 1274.7,690.7 1275.8,690.9 1276.9,690.4 1277.9,690.8 1279.0,690.6 1280.1,689.1 1281.1,689.3 1282.2,689.0 1283.3,688.2 1284.3,687.6 1285.4,687.5 1286.5,687.0 1287.5,685.9 1288.6,685.1 1289.7,683.6 1290.7,683.7 1291.8,683.4 1292.9,683.8 1293.9,684.3 1295.0,684.5 1296.1,685.1 1297.1,686.7 1298.2,688.6 1299.3,690.1 1300.3,691.3 1301.4,691.7 1302.5,691.3 1303.5,691.3 1304.6,691.9 1305.7,692.0 1306.7,691.8 1307.8,691.3 1308.9,691.9 1309.9,692.2 1311.0,692.9 1312.1,694.1 1313.1,693.8 1314.2,695.2 1315.3,695.3 1316.3,695.6 1317.4,695.9 1318.5,695.6 1319.5,695.8 1320.6,694.9 1321.7,694.7 1322.7,694.8 1323.8,694.5 1324.9,694.5 1325.9,693.9 1327.0,693.5 1328.1,693.1 1329.1,692.2 1330.2,690.8 1331.3,690.3 1332.3,689.8 1333.4,689.1 1334.5,688.6 1335.5,688.2 1336.6,687.0 1337.7,686.2 1338.7,685.6 1339.8,684.1 1340.9,683.3 1341.9,682.8 1343.0,681.7 1344.1,681.5 1345.1,680.3 1346.2,680.6 1347.3,680.8 1348.3,681.4 1349.4,681.8 1350.5,682.3 1351.5,683.7 1352.6,684.3 1353.7,685.2 1354.7,686.3 1355.8,687.1 1356.9,687.4 1357.9,687.6 1359.0,688.1 1360.1,688.0 1361.1,688.5 1362.2,689.0 1363.3,689.5 1364.3,689.8 1365.4,690.7 1366.5,691.4 1367.5,692.1 1368.6,693.4 1369.7,693.3 1370.7,692.8 1371.8,692.6 1372.9,692.6 1373.9,692.3 1375.0,690.9 1376.1,691.5 1377.1,690.6 1378.2,690.6 1379.3,690.7 1380.3,689.5 1381.4,689.3 1382.5,689.1 1383.5,688.2 1384.6,688.1 1385.7,687.6 1386.7,687.1 1387.8,686.9 1388.9,685.1 1389.9,684.1 1391.0,683.6 1392.1,683.3 1393.1,683.1 1394.2,683.9 1395.3,684.0 1396.3,684.7 1397.4,685.8 1398.5,687.7 1399.5,689.8 1400.6,690.7 1401.7,690.9 1402.7,691.2 1403.8,691.8 1404.9,691.7 1405.9,691.5 1407.0,691.9 1408.1,691.3 1409.1,691.2 1410.2,691.7 1411.3,691.7 1412.3,693.0 1413.4,694.3 1414.5,694.0 1415.5,695.1 1416.6,695.2 1417.7,695.8 1418.7,695.9 1419.8,695.3 1420.9,695.4 1421.9,694.8 1423.0,695.0 1424.1,695.1 1425.1,694.5 1426.2,694.4 1427.3,694.0 1428.3,692.9 1429.4,693.1 1430.5,692.5 1431.5,690.7 1432.6,690.8 1433.7,690.0 1434.7,688.9 1435.8,689.3 1436.9,688.3 1437.9,687.6 1439.0,686.3 1440.1,685.7 1441.1,684.3 1442.2,683.7 1443.3,683.1 1444.3,681.9 1445.4,681.6 1446.5,680.7 1447.5,680.2 1448.6,680.6 1449.7,680.8 1450.7,681.9 1451.8,682.2 1452.9,683.3 1453.9,684.0 1455.0,684.9 1456.1,686.1 1457.1,686.7 1458.2,687.4 1459.3,687.2 1460.3,687.7 1461.4,688.1 1462.5,688.6 1463.5,688.4 1464.6,689.1 1465.7,689.8 1466.7,690.4 1467.8,691.3 1468.9,691.5 1469.9,692.4 1471.0,693.1 1472.1,692.8 1473.1,692.6 1474.2,691.9 1475.3,692.6 1476.3,692.0 1477.4,690.6 1478.5,691.0 1479.5,690.9 1480.6,690.7 1481.7,690.7 1482.7,689.3 1483.8,688.8 1484.9,688.4 1485.9,688.4 1487.0,687.7 1488.1,687.7 1489.1,687.0 1490.2,686.6 1491.3,685.3 1492.3,684.0 1493.4,683.7 1494.5,683.3 1495.5,683.7 1496.6,684.1 1497.7,684.5 1498.7,684.3 1499.8,685.9 1500.9,687.6 1501.9,689.9 1503.0,691.1 1504.1,691.5 1505.1,691.1 1506.2,691.3 1507.3,691.9 1508.3,692.0 1509.4,691.5 1510.5,691.5 1511.5,691.3 1512.6,692.0 1513.7,691.9 1514.7,693.6 1515.8,694.3 1516.9,694.0 1517.9,695.0 1519.0,695.3 1520.1,696.2 1521.1,695.9 1522.2,695.3 1523.3,695.2 1524.3,695.0 1525.4,695.0 1526.5,694.8 1527.5,694.3 1528.6,694.1 1529.7,693.3 1530.7,693.2 1531.8,692.5 1532.9,691.8 1533.9,690.8 1535.0,691.0 1536.1,689.6 1537.1,688.8 1538.2,689.1 1539.3,687.9 1540.3,687.1 1541.4,686.3 1542.5,685.1 1543.5,684.6 1544.6,683.8 1545.7,683.4 1546.7,682.5 1547.8,681.0 1548.9,680.9 1549.9,680.5 1551.0,680.8 1552.1,681.2 1553.1,681.8 1554.2,682.4 1555.3,683.1 1556.3,683.9 1557.4,685.0 1558.5,686.3 1559.5,687.5 1560.6,687.4 1561.7,687.1 1562.7,687.8 1563.8,688.2 1564.9,688.4 1565.9,689.0 1567.0,689.1 1568.1,689.7 1569.1,690.3 1570.2,691.0 1571.3,691.9 1572.3,692.3 1573.4,693.9 1574.5,692.6 1575.5,692.2 1576.6,692.0 1577.7,691.9 1578.7,691.7 1579.8,690.7 1580.9,690.9 1581.9,691.0 1583.0,690.4 1584.1,690.2 1585.1,689.5" fill="none" stroke="#000" stroke-width="1" stroke-linejoin="round"/>
<rect x="403.2" y="702" width="1278.9" height="252" fill="#fafafa"/>
<path d="M404 735.5 H1681.5" stroke="#d2d2d2" stroke-width="1.4"/>
<path d="M404 791.5 H1681.5" stroke="#d2d2d2" stroke-width="1.4"/>
<path d="M404 848.5 H1681.5" stroke="#d2d2d2" stroke-width="1.4"/>
<path d="M404 905.5 H1681.5" stroke="#d2d2d2" stroke-width="1.4"/>
<path d="M616.5 703 V953" stroke="#d2d2d2" stroke-width="1.4"/>
<path d="M829.5 703 V953" stroke="#d2d2d2" stroke-width="1.4"/>
<path d="M1043.5 703 V953" stroke="#d2d2d2" stroke-width="1.4"/>
<path d="M1256.5 703 V953" stroke="#d2d2d2" stroke-width="1.4"/>
<path d="M1469.5 703 V953" stroke="#d2d2d2" stroke-width="1.4"/>
<path d="M463.5 703 V953" stroke="#969696" stroke-width="1.4"/>
<text x="458.0" y="714.3" font-size="12" fill="#a0a0a0" text-anchor="end">1</text>
<path d="M614.5 703 V953" stroke="#969696" stroke-width="1.4"/>
<text x="609.0" y="714.3" font-size="12" fill="#a0a0a0" text-anchor="end">2</text>
<path d="M765.5 703 V953" stroke="#969696" stroke-width="1.4"/>
<text x="760.0" y="714.3" font-size="12" fill="#a0a0a0" text-anchor="end">3</text>
<path d="M919.5 703 V953" stroke="#969696" stroke-width="1.4"/>
<text x="914.0" y="714.3" font-size="12" fill="#a0a0a0" text-anchor="end">4</text>
<path d="M1070.5 703 V953" stroke="#969696" stroke-width="1.4"/>
<text x="1065.0" y="714.3" font-size="12" fill="#a0a0a0" text-anchor="end">5</text>
<path d="M1221.5 703 V953" stroke="#969696" stroke-width="1.4"/>
<text x="1216.0" y="714.3" font-size="12" fill="#a0a0a0" text-anchor="end">6</text>
<path d="M1374.5 703 V953" stroke="#969696" stroke-width="1.4"/>
<text x="1369.0" y="714.3" font-size="12" fill="#a0a0a0" text-anchor="end">7</text>
<polyline points="403.5,865.4 404.5,860.1 405.5,855.7 406.5,849.9 407.5,842.8 408.5,838.9 409.5,834.1 410.5,830.4 411.5,824.7 412.5,821.4 413.5,815.3 414.5,808.9 415.5,804.6 416.5,802.2 417.5,799.7 418.5,795.0 419.5,794.3 420.5,794.7 421.5,797.2 422.5,799.8 423.5,804.6 424.5,808.9 425.5,811.2 426.5,816.4 427.5,822.2 428.5,827.2 429.5,831.2 430.5,837.4 431.5,843.9 432.5,851.2 433.5,856.7 434.5,858.4 435.5,859.6 436.5,859.2 437.5,859.4 438.5,863.1 439.5,866.2 440.5,867.9 441.5,869.2 442.5,873.0 443.5,875.6 444.5,877.0 445.5,879.1 446.5,881.7 447.5,886.4 448.5,893.4 449.5,897.9 450.5,902.4 451.5,903.9 452.5,907.6 453.5,917.1 454.5,914.9 455.5,908.5 456.5,907.6 457.5,905.5 458.5,904.6 459.5,905.0 460.5,903.1 461.5,902.3 462.5,895.0 463.5,893.6 464.5,895.8 465.5,895.5 466.5,891.9 467.5,887.9 468.5,890.2 469.5,889.4 470.5,884.3 471.5,877.9 472.5,877.0 473.5,875.2 474.5,870.7 475.5,866.8 476.5,865.6 477.5,864.4 478.5,864.1 479.5,859.9 480.5,858.4 481.5,854.4 482.5,848.4 483.5,842.2 484.5,835.4 485.5,830.0 486.5,824.9 487.5,822.9 488.5,822.8 489.5,822.9 490.5,826.0 491.5,827.8 492.5,829.0 493.5,830.4 494.5,834.1 495.5,841.6 496.5,848.9 497.5,860.2 498.5,872.6 499.5,885.5 500.5,889.4 501.5,893.1 502.5,895.9 503.5,897.9 504.5,898.6 505.5,898.2 506.5,899.9 507.5,899.4 508.5,901.4 509.5,899.8 510.5,898.5 511.5,897.7 512.5,897.7 513.5,898.8 514.5,899.7 515.5,900.3 516.5,903.2 517.5,904.9 518.5,916.0 519.5,923.6 520.5,922.6 521.5,925.8 522.5,929.5 523.5,932.8 524.5,936.1 525.5,936.2 526.5,941.0 527.5,939.0 528.5,937.7 529.5,936.9 530.5,937.3 531.5,934.1 532.5,932.0 533.5,932.6 534.5,930.6 535.5,929.7 536.5,926.2 537.5,925.5 538.5,924.2 539.5,923.2 540.5,918.1 541.5,915.8 542.5,912.5 543.5,910.5 544.5,907.8 545.5,903.6 546.5,893.3 547.5,888.9 548.5,889.3 549.5,886.3 550.5,880.1 551.5,875.0 552.5,875.2 553.5,873.4 554.5,867.2 555.5,863.1 556.5,857.3 557.5,852.6 558.5,844.7 559.5,840.6 560.5,836.1 561.5,830.4 562.5,826.9 563.5,822.5 564.5,816.4 565.5,811.0 566.5,806.1 567.5,803.7 568.5,799.2 569.5,796.7 570.5,793.6 571.5,794.5 572.5,795.8 573.5,800.2 574.5,803.0 575.5,807.9 576.5,810.4 577.5,815.7 578.5,822.1 579.5,826.1 580.5,831.3 581.5,836.0 582.5,842.1 583.5,848.7 584.5,855.7 585.5,858.9 586.5,857.9 587.5,859.7 588.5,858.6 589.5,862.5 590.5,863.9 591.5,866.5 592.5,869.8 593.5,871.0 594.5,874.0 595.5,877.5 596.5,879.7 597.5,882.5 598.5,885.7 599.5,890.3 600.5,896.2 601.5,901.2 602.5,904.3 603.5,905.2 604.5,916.4 605.5,915.6 606.5,909.4 607.5,906.8 608.5,905.2 609.5,906.4 610.5,904.9 611.5,905.1 612.5,901.7 613.5,897.3 614.5,892.2 615.5,895.3 616.5,895.7 617.5,893.1 618.5,888.7 619.5,889.3 620.5,890.4 621.5,883.6 622.5,879.0 623.5,877.1 624.5,876.1 625.5,871.4 626.5,867.4 627.5,867.4 628.5,866.0 629.5,864.4 630.5,860.7 631.5,857.6 632.5,854.9 633.5,848.4 634.5,842.1 635.5,836.3 636.5,829.8 637.5,824.6 638.5,821.9 639.5,820.3 640.5,822.2 641.5,824.6 642.5,826.4 643.5,827.8 644.5,830.3 645.5,834.0 646.5,840.5 647.5,848.1 648.5,859.2 649.5,870.9 650.5,883.3 651.5,890.5 652.5,893.7 653.5,895.5 654.5,897.4 655.5,897.3 656.5,899.4 657.5,897.9 658.5,900.1 659.5,901.7 660.5,900.2 661.5,899.7 662.5,898.1 663.5,898.1 664.5,898.2 665.5,898.8 666.5,901.4 667.5,902.8 668.5,905.3 669.5,915.1 670.5,924.7 671.5,921.9 672.5,925.0 673.5,930.0 674.5,933.2 675.5,936.4 676.5,935.6 677.5,940.4 678.5,939.7 679.5,937.5 680.5,937.4 681.5,937.7 682.5,933.7 683.5,932.6 684.5,932.3 685.5,931.1 686.5,929.7 687.5,926.8 688.5,925.3 689.5,924.6 690.5,922.8 691.5,918.5 692.5,915.9 693.5,912.7 694.5,909.2 695.5,907.2 696.5,902.8 697.5,894.4 698.5,889.2 699.5,890.2 700.5,886.3 701.5,880.4 702.5,875.0 703.5,873.9 704.5,873.8 705.5,867.4 706.5,862.0 707.5,857.7 708.5,852.7 709.5,844.5 710.5,839.0 711.5,835.7 712.5,830.5 713.5,826.4 714.5,822.2 715.5,817.2 716.5,811.6 717.5,805.0 718.5,802.5 719.5,800.2 720.5,796.7 721.5,792.8 722.5,794.0 723.5,795.3 724.5,799.1 725.5,803.7 726.5,808.1 727.5,811.0 728.5,815.7 729.5,821.3 730.5,827.0 731.5,832.0 732.5,836.2 733.5,843.3 734.5,850.4 735.5,857.8 736.5,858.6 737.5,858.3 738.5,859.3 739.5,859.4 740.5,862.4 741.5,864.6 742.5,867.2 743.5,869.5 744.5,871.9 745.5,873.7 746.5,876.6 747.5,879.8 748.5,881.3 749.5,885.2 750.5,892.7 751.5,896.9 752.5,901.0 753.5,903.8 754.5,907.9 755.5,915.8 756.5,915.2 757.5,909.4 758.5,906.7 759.5,905.7 760.5,906.0 761.5,905.4 762.5,903.7 763.5,901.2 764.5,895.3 765.5,893.3 766.5,896.0 767.5,895.7 768.5,892.0 769.5,889.3 770.5,889.7 771.5,889.6 772.5,883.8 773.5,879.3 774.5,877.9 775.5,874.7 776.5,872.7 777.5,868.5 778.5,866.3 779.5,865.7 780.5,863.8 781.5,860.7 782.5,859.2 783.5,855.6 784.5,850.5 785.5,844.3 786.5,838.7 787.5,831.9 788.5,825.1 789.5,822.7 790.5,821.5 791.5,821.0 792.5,824.1 793.5,825.6 794.5,827.1 795.5,829.3 796.5,831.5 797.5,836.1 798.5,843.9 799.5,854.0 800.5,865.2 801.5,877.2 802.5,887.0 803.5,890.5 804.5,895.0 805.5,896.6 806.5,898.3 807.5,898.7 808.5,897.8 809.5,898.6 810.5,899.3 811.5,901.7 812.5,899.7 813.5,898.5 814.5,898.9 815.5,898.7 816.5,897.9 817.5,900.0 818.5,901.3 819.5,902.4 820.5,904.3 821.5,916.7 822.5,924.2 823.5,922.4 824.5,925.5 825.5,930.4 826.5,934.0 827.5,934.8 828.5,935.9 829.5,939.5 830.5,938.4 831.5,938.6 832.5,936.9 833.5,936.6 834.5,934.4 835.5,932.0 836.5,932.7 837.5,931.6 838.5,930.1 839.5,927.6 840.5,924.7 841.5,924.3 842.5,924.5 843.5,921.0 844.5,917.7 845.5,913.6 846.5,910.6 847.5,907.5 848.5,905.7 849.5,898.6 850.5,891.3 851.5,889.2 852.5,890.0 853.5,883.9 854.5,879.0 855.5,874.6 856.5,875.2 857.5,871.4 858.5,865.0 859.5,860.5 860.5,856.7 861.5,850.5 862.5,843.8 863.5,838.6 864.5,834.1 865.5,830.6 866.5,825.3 867.5,821.7 868.5,816.7 869.5,810.9 870.5,805.8 871.5,803.6 872.5,799.5 873.5,796.9 874.5,792.6 875.5,794.4 876.5,795.9 877.5,798.4 878.5,804.0 879.5,806.1 880.5,810.5 881.5,813.9 882.5,821.4 883.5,826.3 884.5,830.6 885.5,833.8 886.5,841.3 887.5,848.4 888.5,854.4 889.5,857.2 890.5,859.2 891.5,858.3 892.5,859.7 893.5,860.6 894.5,863.0 895.5,865.5 896.5,869.1 897.5,871.7 898.5,873.0 899.5,876.0 900.5,877.6 901.5,881.3 902.5,883.4 903.5,887.3 904.5,893.4 905.5,898.9 906.5,901.5 907.5,905.5 908.5,909.9 909.5,916.2 910.5,913.9 911.5,908.1 912.5,907.2 913.5,905.0 914.5,906.2 915.5,904.8 916.5,904.5 917.5,901.4 918.5,895.8 919.5,894.5 920.5,895.4 921.5,895.1 922.5,891.7 923.5,889.1 924.5,888.9 925.5,889.3 926.5,882.6 927.5,878.6 928.5,877.2 929.5,874.6 930.5,871.3 931.5,866.8 932.5,866.9 933.5,864.3 934.5,864.4 935.5,861.6 936.5,858.6 937.5,854.5 938.5,847.8 939.5,841.6 940.5,835.7 941.5,829.1 942.5,824.4 943.5,821.3 944.5,821.0 945.5,822.9 946.5,824.9 947.5,826.6 948.5,827.1 949.5,829.7 950.5,833.1 951.5,841.6 952.5,849.9 953.5,860.4 954.5,873.7 955.5,884.1 956.5,890.4 957.5,895.0 958.5,895.7 959.5,898.5 960.5,898.4 961.5,897.6 962.5,898.7 963.5,899.9 964.5,900.5 965.5,901.0 966.5,898.8 967.5,898.9 968.5,898.2 969.5,898.0 970.5,899.8 971.5,900.1 972.5,902.5 973.5,906.1 974.5,917.3 975.5,924.1 976.5,921.2 977.5,925.3 978.5,929.5 979.5,934.1 980.5,934.9 981.5,937.0 982.5,939.9 983.5,938.7 984.5,937.8 985.5,936.6 986.5,936.0 987.5,934.9 988.5,932.0 989.5,932.5 990.5,932.0 991.5,929.1 992.5,926.2 993.5,924.4 994.5,925.0 995.5,921.6 996.5,918.7 997.5,915.6 998.5,911.8 999.5,909.5 1000.5,906.2 1001.5,902.9 1002.5,893.3 1003.5,888.9 1004.5,889.2 1005.5,885.9 1006.5,879.7 1007.5,874.8 1008.5,874.1 1009.5,873.5 1010.5,867.2 1011.5,862.6 1012.5,856.6 1013.5,852.9 1014.5,844.9 1015.5,840.1 1016.5,835.2 1017.5,831.0 1018.5,825.6 1019.5,822.1 1020.5,815.8 1021.5,810.5 1022.5,805.0 1023.5,802.6 1024.5,799.6 1025.5,795.7 1026.5,794.3 1027.5,793.9 1028.5,795.9 1029.5,799.2 1030.5,804.1 1031.5,807.9 1032.5,811.3 1033.5,814.8 1034.5,821.4 1035.5,827.2 1036.5,831.9 1037.5,834.7 1038.5,843.3 1039.5,850.5 1040.5,857.6 1041.5,857.7 1042.5,859.5 1043.5,858.9 1044.5,860.3 1045.5,861.3 1046.5,865.8 1047.5,867.2 1048.5,869.5 1049.5,871.2 1050.5,874.0 1051.5,877.4 1052.5,879.8 1053.5,881.3 1054.5,885.1 1055.5,891.1 1056.5,896.5 1057.5,900.5 1058.5,903.8 1059.5,907.2 1060.5,917.4 1061.5,916.0 1062.5,908.8 1063.5,907.4 1064.5,906.5 1065.5,906.2 1066.5,905.7 1067.5,904.4 1068.5,901.7 1069.5,896.6 1070.5,893.9 1071.5,896.1 1072.5,895.5 1073.5,892.7 1074.5,888.8 1075.5,888.5 1076.5,890.6 1077.5,884.1 1078.5,879.3 1079.5,876.3 1080.5,875.6 1081.5,872.1 1082.5,868.4 1083.5,866.8 1084.5,865.7 1085.5,864.3 1086.5,861.0 1087.5,857.8 1088.5,855.4 1089.5,849.1 1090.5,842.9 1091.5,835.2 1092.5,830.2 1093.5,823.9 1094.5,822.9 1095.5,820.4 1096.5,823.1 1097.5,825.2 1098.5,826.0 1099.5,828.5 1100.5,829.8 1101.5,832.9 1102.5,840.7 1103.5,848.6 1104.5,860.8 1105.5,873.5 1106.5,885.3 1107.5,890.6 1108.5,893.9 1109.5,896.5 1110.5,898.2 1111.5,898.4 1112.5,899.3 1113.5,899.6 1114.5,899.8 1115.5,900.2 1116.5,900.8 1117.5,900.0 1118.5,898.1 1119.5,898.8 1120.5,899.4 1121.5,900.3 1122.5,900.0 1123.5,902.5 1124.5,905.1 1125.5,917.0 1126.5,924.7 1127.5,921.8 1128.5,925.8 1129.5,930.4 1130.5,933.7 1131.5,935.1 1132.5,936.8 1133.5,941.1 1134.5,939.1 1135.5,937.1 1136.5,936.4 1137.5,936.0 1138.5,934.2 1139.5,932.2 1140.5,932.1 1141.5,931.8 1142.5,928.2 1143.5,927.0 1144.5,924.2 1145.5,924.8 1146.5,921.3 1147.5,917.9 1148.5,916.1 1149.5,911.9 1150.5,908.8 1151.5,907.3 1152.5,901.9 1153.5,893.2 1154.5,888.7 1155.5,889.9 1156.5,886.2 1157.5,879.6 1158.5,876.3 1159.5,873.9 1160.5,872.7 1161.5,865.8 1162.5,861.3 1163.5,856.0 1164.5,850.3 1165.5,844.6 1166.5,838.8 1167.5,835.0 1168.5,829.4 1169.5,825.1 1170.5,820.1 1171.5,815.6 1172.5,810.7 1173.5,805.4 1174.5,802.0 1175.5,799.8 1176.5,796.2 1177.5,794.1 1178.5,794.0 1179.5,796.6 1180.5,800.4 1181.5,805.4 1182.5,807.8 1183.5,811.9 1184.5,817.2 1185.5,822.9 1186.5,827.9 1187.5,832.1 1188.5,838.0 1189.5,844.7 1190.5,851.4 1191.5,858.3 1192.5,857.4 1193.5,859.6 1194.5,859.3 1195.5,860.3 1196.5,862.8 1197.5,866.0 1198.5,868.6 1199.5,870.6 1200.5,873.1 1201.5,874.2 1202.5,877.3 1203.5,879.4 1204.5,883.5 1205.5,887.8 1206.5,892.8 1207.5,898.3 1208.5,902.3 1209.5,903.9 1210.5,909.6 1211.5,917.2 1212.5,913.9 1213.5,908.0 1214.5,907.5 1215.5,905.2 1216.5,905.4 1217.5,905.0 1218.5,904.5 1219.5,902.0 1220.5,894.0 1221.5,894.7 1222.5,895.5 1223.5,896.2 1224.5,891.8 1225.5,888.8 1226.5,889.4 1227.5,888.0 1228.5,883.1 1229.5,879.2 1230.5,877.3 1231.5,874.3 1232.5,870.2 1233.5,867.5 1234.5,867.0 1235.5,864.4 1236.5,864.2 1237.5,860.2 1238.5,857.6 1239.5,854.1 1240.5,848.5 1241.5,842.5 1242.5,837.0 1243.5,830.8 1244.5,823.9 1245.5,821.9 1246.5,822.1 1247.5,821.2 1248.5,823.8 1249.5,826.1 1250.5,826.8 1251.5,829.0 1252.5,832.4 1253.5,838.3 1254.5,847.1 1255.5,856.5 1256.5,868.0 1257.5,881.3 1258.5,888.4 1259.5,893.4 1260.5,895.5 1261.5,897.6 1262.5,897.5 1263.5,897.6 1264.5,899.2 1265.5,899.4 1266.5,900.6 1267.5,901.5 1268.5,900.5 1269.5,898.4 1270.5,898.2 1271.5,899.5 1272.5,899.0 1273.5,899.7 1274.5,901.6 1275.5,902.6 1276.5,909.8 1277.5,920.5 1278.5,924.1 1279.5,921.5 1280.5,926.6 1281.5,932.0 1282.5,934.2 1283.5,935.3 1284.5,936.7 1285.5,940.4 1286.5,939.1 1287.5,937.8 1288.5,937.0 1289.5,936.8 1290.5,933.0 1291.5,931.9 1292.5,932.1 1293.5,932.2 1294.5,929.3 1295.5,927.1 1296.5,925.7 1297.5,924.1 1298.5,923.1 1299.5,919.3 1300.5,915.4 1301.5,912.5 1302.5,910.4 1303.5,906.8 1304.5,903.2 1305.5,895.1 1306.5,889.7 1307.5,889.7 1308.5,887.4 1309.5,882.1 1310.5,875.0 1311.5,874.5 1312.5,873.1 1313.5,868.4 1314.5,863.1 1315.5,859.4 1316.5,854.4 1317.5,847.2 1318.5,840.8 1319.5,836.7 1320.5,831.8 1321.5,828.4 1322.5,823.9 1323.5,819.2 1324.5,812.5 1325.5,808.1 1326.5,804.7 1327.5,801.1 1328.5,798.5 1329.5,795.1 1330.5,794.5 1331.5,795.8 1332.5,797.8 1333.5,802.3 1334.5,804.7 1335.5,809.2 1336.5,812.7 1337.5,818.3 1338.5,823.8 1339.5,827.6 1340.5,832.4 1341.5,838.6 1342.5,844.9 1343.5,851.6 1344.5,856.9 1345.5,857.5 1346.5,859.3 1347.5,859.8 1348.5,860.7 1349.5,862.5 1350.5,865.8 1351.5,866.9 1352.5,870.6 1353.5,872.0 1354.5,873.8 1355.5,877.5 1356.5,879.0 1357.5,881.7 1358.5,884.9 1359.5,891.9 1360.5,897.2 1361.5,901.7 1362.5,903.3 1363.5,906.9 1364.5,915.7 1365.5,915.3 1366.5,909.6 1367.5,907.2 1368.5,905.8 1369.5,905.6 1370.5,904.7 1371.5,905.0 1372.5,902.0 1373.5,898.8 1374.5,893.1 1375.5,895.4 1376.5,895.3 1377.5,893.8 1378.5,889.0 1379.5,888.3 1380.5,891.1 1381.5,884.8 1382.5,880.6 1383.5,878.0 1384.5,875.9 1385.5,872.5 1386.5,869.0 1387.5,867.0 1388.5,865.1 1389.5,865.1 1390.5,863.1 1391.5,859.9 1392.5,857.3 1393.5,851.4 1394.5,846.5 1395.5,838.3 1396.5,832.3 1397.5,826.3 1398.5,822.6 1399.5,822.0 1400.5,821.1 1401.5,823.0 1402.5,825.2 1403.5,826.3 1404.5,828.1 1405.5,830.8 1406.5,834.5 1407.5,843.3 1408.5,852.0 1409.5,863.4 1410.5,874.8 1411.5,887.1 1412.5,890.4 1413.5,894.0 1414.5,896.4 1415.5,898.1 1416.5,899.0 1417.5,899.0 1418.5,899.9 1419.5,900.9 1420.5,901.5 1421.5,900.9 1422.5,898.5 1423.5,897.8 1424.5,897.7 1425.5,899.5 1426.5,900.1 1427.5,901.1 1428.5,901.9 1429.5,904.7 1430.5,915.6 1431.5,924.6 1432.5,923.2 1433.5,924.2 1434.5,929.0 1435.5,932.7 1436.5,935.2 1437.5,937.0 1438.5,940.2 1439.5,939.2 1440.5,936.8 1441.5,936.5 1442.5,936.4 1443.5,935.2 1444.5,932.4 1445.5,932.9 1446.5,932.2 1447.5,930.4 1448.5,927.5 1449.5,926.1 1450.5,923.9 1451.5,922.8 1452.5,920.1 1453.5,916.7 1454.5,913.2 1455.5,910.3 1456.5,907.1 1457.5,906.1 1458.5,898.0 1459.5,891.7 1460.5,890.2 1461.5,888.9 1462.5,883.7 1463.5,877.3 1464.5,875.7 1465.5,874.9 1466.5,869.7 1467.5,863.9 1468.5,859.5 1469.5,856.0 1470.5,849.0 1471.5,841.5 1472.5,838.6 1473.5,834.1 1474.5,829.0 1475.5,823.8 1476.5,821.0 1477.5,814.9 1478.5,808.6 1479.5,804.7 1480.5,802.2 1481.5,799.5 1482.5,795.3 1483.5,794.0 1484.5,794.3 1485.5,795.9 1486.5,801.2 1487.5,804.2 1488.5,807.1 1489.5,811.5 1490.5,815.7 1491.5,822.0 1492.5,827.3 1493.5,831.4 1494.5,836.3 1495.5,843.8 1496.5,850.2 1497.5,856.3 1498.5,858.5 1499.5,858.0 1500.5,858.9 1501.5,859.2 1502.5,862.4 1503.5,865.2 1504.5,866.7 1505.5,869.7 1506.5,872.1 1507.5,874.1 1508.5,876.0 1509.5,879.9 1510.5,881.7 1511.5,883.4 1512.5,890.1 1513.5,897.2 1514.5,899.7 1515.5,903.4 1516.5,906.3 1517.5,916.7 1518.5,917.3 1519.5,911.2 1520.5,907.0 1521.5,905.6 1522.5,906.4 1523.5,905.8 1524.5,903.9 1525.5,902.1 1526.5,899.7 1527.5,892.6 1528.5,894.7 1529.5,896.3 1530.5,894.8 1531.5,890.6 1532.5,888.7 1533.5,890.4 1534.5,885.7 1535.5,880.0 1536.5,878.3" fill="none" stroke="#000" stroke-width="1.15" stroke-linejoin="round"/>
<rect x="403.2" y="702" width="1278.9" height="252" fill="none" stroke="#000" stroke-width="2"/>
<path d="M399.8 948.5 H403" stroke="#000" stroke-width="1"/>
<path d="M399.8 933.5 H403" stroke="#000" stroke-width="1"/>
<path d="M399.8 919.5 H403" stroke="#000" stroke-width="1"/>
<path d="M396.8 905.5 H403" stroke="#000" stroke-width="1.4"/>
<path d="M399.8 891.5 H403" stroke="#000" stroke-width="1"/>
<path d="M399.8 877.5 H403" stroke="#000" stroke-width="1"/>
<path d="M399.8 863.5 H403" stroke="#000" stroke-width="1"/>
<path d="M396.8 848.5 H403" stroke="#000" stroke-width="1.4"/>
<path d="M399.8 834.5 H403" stroke="#000" stroke-width="1"/>
<path d="M399.8 820.5 H403" stroke="#000" stroke-width="1"/>
<path d="M399.8 806.5 H403" stroke="#000" stroke-width="1"/>
<path d="M396.8 792.5 H403" stroke="#000" stroke-width="1.4"/>
<path d="M399.8 778.5 H403" stroke="#000" stroke-width="1"/>
<path d="M399.8 764.5 H403" stroke="#000" stroke-width="1"/>
<path d="M399.8 749.5 H403" stroke="#000" stroke-width="1"/>
<path d="M396.8 735.5 H403" stroke="#000" stroke-width="1.4"/>
<path d="M399.8 721.5 H403" stroke="#000" stroke-width="1"/>
<path d="M399.8 707.5 H403" stroke="#000" stroke-width="1"/>
<text x="394.6" y="739.0" font-size="12.3" font-weight="bold" text-anchor="end">6</text>
<text x="394.6" y="795.6" font-size="12.3" font-weight="bold" text-anchor="end">4</text>
<text x="394.6" y="852.2" font-size="12.3" font-weight="bold" text-anchor="end">2</text>
<text x="394.6" y="908.8" font-size="12.3" font-weight="bold" text-anchor="end">0</text>
<path d="M403.2 955 V961.5" stroke="#000" stroke-width="1.6"/>
<path d="M438.5 955 V958.5" stroke="#000" stroke-width="1"/>
<path d="M473.5 955 V958.5" stroke="#000" stroke-width="1"/>
<path d="M509.5 955 V958.5" stroke="#000" stroke-width="1"/>
<path d="M545.5 955 V958.5" stroke="#000" stroke-width="1"/>
<path d="M580.5 955 V958.5" stroke="#000" stroke-width="1"/>
<path d="M616.5 955 V961.5" stroke="#000" stroke-width="1.6"/>
<path d="M651.5 955 V958.5" stroke="#000" stroke-width="1"/>
<path d="M687.5 955 V958.5" stroke="#000" stroke-width="1"/>
<path d="M722.5 955 V958.5" stroke="#000" stroke-width="1"/>
<path d="M758.5 955 V958.5" stroke="#000" stroke-width="1"/>
<path d="M793.5 955 V958.5" stroke="#000" stroke-width="1"/>
<path d="M829.5 955 V961.5" stroke="#000" stroke-width="1.6"/>
<path d="M865.5 955 V958.5" stroke="#000" stroke-width="1"/>
<path d="M900.5 955 V958.5" stroke="#000" stroke-width="1"/>
<path d="M936.5 955 V958.5" stroke="#000" stroke-width="1"/>
<path d="M971.5 955 V958.5" stroke="#000" stroke-width="1"/>
<path d="M1007.5 955 V958.5" stroke="#000" stroke-width="1"/>
<path d="M1042.5 955 V961.5" stroke="#000" stroke-width="1.6"/>
<path d="M1078.5 955 V958.5" stroke="#000" stroke-width="1"/>
<path d="M1113.5 955 V958.5" stroke="#000" stroke-width="1"/>
<path d="M1149.5 955 V958.5" stroke="#000" stroke-width="1"/>
<path d="M1185.5 955 V958.5" stroke="#000" stroke-width="1"/>
<path d="M1220.5 955 V958.5" stroke="#000" stroke-width="1"/>
<path d="M1256.5 955 V961.5" stroke="#000" stroke-width="1.6"/>
<path d="M1291.5 955 V958.5" stroke="#000" stroke-width="1"/>
<path d="M1327.5 955 V958.5" stroke="#000" stroke-width="1"/>
<path d="M1362.5 955 V958.5" stroke="#000" stroke-width="1"/>
<path d="M1398.5 955 V958.5" stroke="#000" stroke-width="1"/>
<path d="M1433.5 955 V958.5" stroke="#000" stroke-width="1"/>
<path d="M1469.5 955 V961.5" stroke="#000" stroke-width="1.6"/>
<path d="M1505.5 955 V958.5" stroke="#000" stroke-width="1"/>
<path d="M1540.5 955 V958.5" stroke="#000" stroke-width="1"/>
<path d="M1576.5 955 V958.5" stroke="#000" stroke-width="1"/>
<path d="M1611.5 955 V958.5" stroke="#000" stroke-width="1"/>
<path d="M1647.5 955 V958.5" stroke="#000" stroke-width="1"/>
<path d="M1682.5 955 V961.5" stroke="#000" stroke-width="1.6"/>
<text x="402.3" y="973.3" font-size="12.2" font-weight="bold" text-anchor="middle">00:30</text>
<text x="615.6" y="973.3" font-size="12.2" font-weight="bold" text-anchor="middle">00:40</text>
<text x="829.0" y="973.3" font-size="12.2" font-weight="bold" text-anchor="middle">00:50</text>
<text x="1042.3" y="973.3" font-size="12.2" font-weight="bold" text-anchor="middle">01:00</text>
<text x="1255.6" y="973.3" font-size="12.2" font-weight="bold" text-anchor="middle">01:10</text>
<text x="1469.0" y="973.3" font-size="12.2" font-weight="bold" text-anchor="middle">01:20</text>
<text x="1682.3" y="973.3" font-size="12.2" font-weight="bold" text-anchor="middle">01:30</text>
<text x="350" y="973.3" font-size="12.2" font-weight="bold">Time</text>
<text transform="translate(355.5,830.0) rotate(-90)" font-size="12.2" font-weight="bold" text-anchor="middle">KW</text>
<text x="1630" y="734" font-size="16" font-weight="bold" fill="#ee0000">LIVE</text>
</svg>
<div class="abs" style="left:308.2px;top:667.2px;width:29.7px;height:282.5px;background:#fff;border-radius:4px;border-left:1px solid #777;border-top:1px solid #777;border-right:3.4px solid #6a6a6a;border-bottom:4.4px solid #666;box-shadow:inset 3px 2.6px 0 #c2c2c2,inset -1.5px 0 0 #b8b8b8"><div class="t" style="left:15.2px;top:139px;font-size:13px;transform:translate(-50%,-50%) rotate(-90deg)">Power ( KW )</div></div>
<div class="dis" style="left:1128.5px;top:632px;width:83.0px;height:29px;border-radius:4px"><svg class="abs" style="left:0;top:0" width="30" height="29"><path d="M6.6 15.6 A8.7 8.7 0 1 0 10 7.6" fill="none" stroke="#2a2a2a" stroke-width="2.7"/><path d="M2.2 8.2 L5.6 16.8 L12.6 9.6 Z" fill="#2a2a2a"/></svg><div class="t" style="left:-5.8px;width:120px;text-align:center;top:9.0px;font-size:13px;color:#808080;letter-spacing:-0.6px">Undo</div></div>
<div class="dis" style="left:1223px;top:632px;width:83px;height:29px;border-radius:4px"><svg class="abs" style="left:0;top:0" width="30" height="29"><rect x="2.8" y="3.8" width="22.6" height="22.4" fill="none" stroke="#333" stroke-width="1.3" stroke-dasharray="1.3 1.5"/><path d="M2.8 11.5 V26.2 H17 V19.5 M2.8 11.5 H8" fill="none" stroke="#2a2a2a" stroke-width="1.8"/><path d="M8.5 20 L18 9" stroke="#111" stroke-width="3.2"/><path d="M12.6 6.8 L20.8 5.2 L19.4 13.6 Z" fill="#111"/></svg><div class="t" style="left:-5.950000000000003px;width:120px;text-align:center;top:9.0px;font-size:13px;color:#808080;letter-spacing:-0.5px">Scale Up</div></div>
<div class="dis" style="left:1317.5px;top:632px;width:82.0px;height:29px;border-radius:4px"><svg class="abs" style="left:0;top:0" width="30" height="29"><rect x="2.8" y="3.8" width="22.6" height="22.4" fill="none" stroke="#2a2a2a" stroke-width="1.8"/><rect x="3.2" y="11.8" width="13.6" height="14" fill="none" stroke="#111" stroke-width="1.7" stroke-dasharray="1.5 1.5"/><path d="M18.5 10 L10 20" stroke="#111" stroke-width="3.2"/><path d="M6.2 24 L7.8 15.4 L14.8 21.6 Z" fill="#111"/></svg><div class="t" style="left:-7.1750000000000025px;width:120px;text-align:center;top:11.0px;font-size:9px;color:#808080;letter-spacing:0.05px">Scale Down</div></div>
<div class="dis" style="left:1411px;top:632px;width:83px;height:29px;border-radius:4px"><svg class="abs" style="left:0;top:0" width="30" height="29"><rect x="3" y="5" width="20.6" height="20.6" fill="none" stroke="#222" stroke-width="1.6" stroke-dasharray="1.6 1.5"/><circle cx="10.8" cy="12.6" r="3.7" fill="none" stroke="#1a1a1a" stroke-width="2"/><path d="M13.4 15.6 L19.6 22.2" stroke="#1a1a1a" stroke-width="3"/></svg><div class="t" style="left:-7.625000000000002px;width:120px;text-align:center;top:9.0px;font-size:13px;color:#808080;letter-spacing:-0.05px">Select</div></div>
<div class="btn" style="left:1505px;top:632px;width:83.5px;height:29px;"><svg class="abs" style="left:0;top:0" width="30" height="29"><path d="M12 5 V23 M3.5 14.2 H20.5" stroke="#000" stroke-width="2.1"/><path d="M12 2.6 L15.6 7.6 H8.4 Z M12 25.8 L15.6 20.8 H8.4 Z M1.2 14.2 L6.2 10.6 V17.8 Z M22.8 14.2 L17.8 10.6 V17.8 Z" fill="#000"/></svg><div class="t" style="left:-8.5px;width:120px;text-align:center;top:7.4px;font-size:13px;color:#000;letter-spacing:0px">Pan</div></div>
<div class="dis" style="left:1599px;top:632px;width:83px;height:29px;border-radius:4px"><svg class="abs" style="left:0;top:0" width="30" height="29"><rect x="2.8" y="4.6" width="20.4" height="20.8" fill="#dadada" stroke="#2a2a2a" stroke-width="1.9"/><g stroke="#111" stroke-width="1.9"><path d="M7.5 9.5 L11 13 M18.5 9.5 L15 13 M7.5 20.5 L11 17 M18.5 20.5 L15 17"/></g><path d="M5.8 7.8 H11 L5.8 13Z M20.2 7.8 V13 L15 7.8Z M5.8 22.2 V17 L11 22.2Z M20.2 22.2 H15 L20.2 17Z" fill="#111"/></svg><div class="t" style="left:-6.8249999999999975px;width:120px;text-align:center;top:9.0px;font-size:13px;color:#808080;letter-spacing:-0.05px">Zoom All</div></div>
<div class="dis" style="left:1128.5px;top:985.5px;width:83.0px;height:28.5px;border-radius:4px"><svg class="abs" style="left:0;top:0" width="30" height="29"><path d="M6.6 15.6 A8.7 8.7 0 1 0 10 7.6" fill="none" stroke="#2a2a2a" stroke-width="2.7"/><path d="M2.2 8.2 L5.6 16.8 L12.6 9.6 Z" fill="#2a2a2a"/></svg><div class="t" style="left:-5.8px;width:120px;text-align:center;top:8.8px;font-size:13px;color:#808080;letter-spacing:-0.6px">Undo</div></div>
<div class="dis" style="left:1223px;top:985.5px;width:83px;height:28.5px;border-radius:4px"><svg class="abs" style="left:0;top:0" width="30" height="29"><rect x="2.8" y="3.8" width="22.6" height="22.4" fill="none" stroke="#333" stroke-width="1.3" stroke-dasharray="1.3 1.5"/><path d="M2.8 11.5 V26.2 H17 V19.5 M2.8 11.5 H8" fill="none" stroke="#2a2a2a" stroke-width="1.8"/><path d="M8.5 20 L18 9" stroke="#111" stroke-width="3.2"/><path d="M12.6 6.8 L20.8 5.2 L19.4 13.6 Z" fill="#111"/></svg><div class="t" style="left:-5.950000000000003px;width:120px;text-align:center;top:8.8px;font-size:13px;color:#808080;letter-spacing:-0.5px">Scale Up</div></div>
<div class="dis" style="left:1317.5px;top:985.5px;width:82.0px;height:28.5px;border-radius:4px"><svg class="abs" style="left:0;top:0" width="30" height="29"><rect x="2.8" y="3.8" width="22.6" height="22.4" fill="none" stroke="#2a2a2a" stroke-width="1.8"/><rect x="3.2" y="11.8" width="13.6" height="14" fill="none" stroke="#111" stroke-width="1.7" stroke-dasharray="1.5 1.5"/><path d="M18.5 10 L10 20" stroke="#111" stroke-width="3.2"/><path d="M6.2 24 L7.8 15.4 L14.8 21.6 Z" fill="#111"/></svg><div class="t" style="left:-7.1750000000000025px;width:120px;text-align:center;top:10.8px;font-size:9px;color:#808080;letter-spacing:0.05px">Scale Down</div></div>
<div class="dis" style="left:1411px;top:985.5px;width:83px;height:28.5px;border-radius:4px"><svg class="abs" style="left:0;top:0" width="30" height="29"><rect x="3" y="5" width="20.6" height="20.6" fill="none" stroke="#222" stroke-width="1.6" stroke-dasharray="1.6 1.5"/><circle cx="10.8" cy="12.6" r="3.7" fill="none" stroke="#1a1a1a" stroke-width="2"/><path d="M13.4 15.6 L19.6 22.2" stroke="#1a1a1a" stroke-width="3"/></svg><div class="t" style="left:-7.625000000000002px;width:120px;text-align:center;top:8.8px;font-size:13px;color:#808080;letter-spacing:-0.05px">Select</div></div>
<div class="btn" style="left:1505px;top:985.5px;width:83.5px;height:28.5px;"><svg class="abs" style="left:0;top:0" width="30" height="29"><path d="M12 5 V23 M3.5 14.2 H20.5" stroke="#000" stroke-width="2.1"/><path d="M12 2.6 L15.6 7.6 H8.4 Z M12 25.8 L15.6 20.8 H8.4 Z M1.2 14.2 L6.2 10.6 V17.8 Z M22.8 14.2 L17.8 10.6 V17.8 Z" fill="#000"/></svg><div class="t" style="left:-8.5px;width:120px;text-align:center;top:7.2px;font-size:13px;color:#000;letter-spacing:0px">Pan</div></div>
<div class="dis" style="left:1599px;top:985.5px;width:83px;height:28.5px;border-radius:4px"><svg class="abs" style="left:0;top:0" width="30" height="29"><rect x="2.8" y="4.6" width="20.4" height="20.8" fill="#dadada" stroke="#2a2a2a" stroke-width="1.9"/><g stroke="#111" stroke-width="1.9"><path d="M7.5 9.5 L11 13 M18.5 9.5 L15 13 M7.5 20.5 L11 17 M18.5 20.5 L15 17"/></g><path d="M5.8 7.8 H11 L5.8 13Z M20.2 7.8 V13 L15 7.8Z M5.8 22.2 V17 L11 22.2Z M20.2 22.2 H15 L20.2 17Z" fill="#111"/></svg><div class="t" style="left:-6.8249999999999975px;width:120px;text-align:center;top:8.8px;font-size:13px;color:#808080;letter-spacing:-0.05px">Zoom All</div></div>
<div class="t " style="top:992.80px;font-size:13px;left:357.30px;">Filters:</div>
<div class="abs" style="left:403px;top:985px;width:199.6px;height:29.5px;background:#d3d3d3;border:1px solid #555;border-left:2px solid #555;border-bottom:2px solid #7a7a7a;border-right:2px solid #7a7a7a;border-radius:4px;box-shadow:inset 0 1px 0 #e8e8e8,inset 0 -2px 0 #b0b0b0"></div>
<div class="abs" style="left:403px;top:985px;width:66.5px;height:29.5px;background:#add8e6;border:1px solid #4c5e66;border-left:2px solid #4c5e66;border-bottom:2px solid #5b7d8a;border-radius:4px 0 0 4px;box-shadow:inset 2px 2px 0 #c4e6f2,inset 0 -2px 0 #8fb6c3"></div>
<div class="abs" style="left:469px;top:986px;width:1px;height:27.5px;background:#555"></div><div class="abs" style="left:470px;top:986px;width:1px;height:26px;background:#e4e4e4"></div>
<div class="abs" style="left:535.8px;top:986px;width:1px;height:27.5px;background:#555"></div><div class="abs" style="left:536.8px;top:986px;width:1px;height:26px;background:#e4e4e4"></div>
<div class="t b" style="top:993.25px;font-size:12.1px;left:235.00px;width:400px;text-align:center;">Raw</div>
<div class="t b" style="top:993.98px;font-size:12.05px;left:301.60px;width:400px;text-align:center;color:#808080;">Low Pass</div>
<div class="t b" style="top:987.55px;font-size:11.5px;left:369.50px;width:400px;text-align:center;color:#808080;">Moving</div>
<div class="t b" style="top:1000.95px;font-size:11.7px;left:369.50px;width:400px;text-align:center;color:#808080;">Average</div>
<div class="abs" style="left:1703.2px;top:1026.2px;width:2.6px;height:2.6px;background:#e8e8e8;border-radius:50%"></div>
<div class="abs" style="left:1698.2px;top:1031.2px;width:2.6px;height:2.6px;background:#e8e8e8;border-radius:50%"></div>
<div class="abs" style="left:1703.2px;top:1031.2px;width:2.6px;height:2.6px;background:#e8e8e8;border-radius:50%"></div>
<div class="abs" style="left:1693.2px;top:1036.2px;width:2.6px;height:2.6px;background:#e8e8e8;border-radius:50%"></div>
<div class="abs" style="left:1698.2px;top:1036.2px;width:2.6px;height:2.6px;background:#e8e8e8;border-radius:50%"></div>
<div class="abs" style="left:1703.2px;top:1036.2px;width:2.6px;height:2.6px;background:#e8e8e8;border-radius:50%"></div>
</body></html>
